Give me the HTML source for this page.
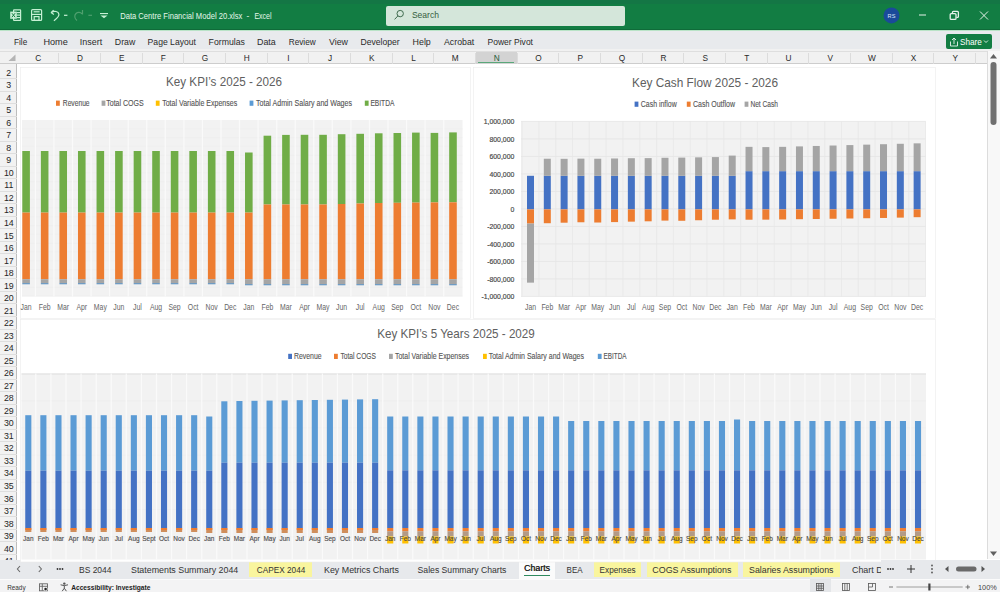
<!DOCTYPE html><html><head><meta charset="utf-8"><style>
*{margin:0;padding:0;box-sizing:border-box}
html,body{width:1000px;height:592px;overflow:hidden;background:#fff;font-family:"Liberation Sans", sans-serif;}
.a{position:absolute}
.t{position:absolute;white-space:nowrap;line-height:1}
</style></head><body>
<div class="a" style="left:0;top:0;width:1000px;height:30px;background:#127d43"></div>
<div class="a" style="left:0;top:0;width:1000px;height:4px;background:#147645"></div>
<div class="a" style="left:0;top:28.5px;width:1000px;height:1.5px;background:#0f6b39"></div>
<div class="a" style="left:0;top:30px;width:1000px;height:1px;background:#b9e3c7"></div>
<div class="a" style="left:0;top:31px;width:1000px;height:17.5px;background:#e8eaed"></div>
<svg class="a" style="left:0;top:0" width="1000" height="30">
<g fill="none" stroke="#c6f0d4" stroke-width="1.2">
 <rect x="13.6" y="9.8" width="7" height="10.6" rx="0.5"/>
 <line x1="16.5" y1="12.6" x2="20.6" y2="12.6"/><line x1="16.5" y1="15.1" x2="20.6" y2="15.1"/><line x1="16.5" y1="17.6" x2="20.6" y2="17.6"/>
 <rect x="31.6" y="9.6" width="10" height="10.8" rx="1"/>
 <line x1="31.6" y1="14.4" x2="41.6" y2="14.4"/>
 <line x1="33.6" y1="11.8" x2="39.6" y2="11.8"/>
 <rect x="34.2" y="16.6" width="4.8" height="3.8"/>
 <path d="M51 12.6 l2.6 -2.4 M51 12.6 l2.9 1.8 M51.3 12.4 c3 -1.8 7.2 -1.2 7.6 1.8 c0.4 2.6 -2.5 4.6 -5 6.6"/>
 <line x1="64" y1="15.3" x2="67.4" y2="15.3"/>
</g>
<rect x="10.2" y="11.6" width="6.6" height="7.2" fill="#c6f0d4"/>
<path d="M11.9 13.2 l3.2 4 M15.1 13.2 l-3.2 4" stroke="#177b44" stroke-width="1"/>
<g fill="none" stroke="#4f9f6e" stroke-width="1.2">
 <path d="M77 20.5 c-2.5 -2 -3 -5 -1 -7 c1.6 -1.6 4.5 -1.5 6 0.4 M82.5 10 v4.5"/>
 <line x1="88.4" y1="15.3" x2="92" y2="15.3"/>
</g>
<g fill="#c6f0d4"><rect x="100" y="13" width="8" height="1.1"/><path d="M100.5 15.6 h7 l-3.5 2.6 z"/></g>
</svg>
<div class="a" style="left:386px;top:6px;width:239px;height:20px;background:#d4e6da;border-radius:2px"></div>
<svg class="a" style="left:386px;top:6px" width="30" height="20"><g fill="none" stroke="#3f6b4e" stroke-width="1"><circle cx="14.2" cy="7.6" r="3.2"/><line x1="11.9" y1="9.9" x2="8.6" y2="13.4"/></g></svg>
<svg class="a" style="left:870px;top:0" width="130" height="30">
<circle cx="21.5" cy="15.4" r="8" fill="#1a4a9a"/>
<text x="21.5" y="17.6" font-size="5.6" font-family="Liberation Sans" fill="#dfe8f7" text-anchor="middle">RS</text>
<line x1="49" y1="15" x2="56" y2="15" stroke="#e6f2ea" stroke-width="1"/>
<g fill="none" stroke="#e6f2ea" stroke-width="1.3"><rect x="80.2" y="13.6" width="5.8" height="5.8" rx="1"/><path d="M82.4 13.4 v-1 a1 1 0 0 1 1 -1 h4 a1 1 0 0 1 1 1 v4 a1 1 0 0 1 -1 1 h-1"/></g>
<g stroke="#e6f2ea" stroke-width="1"><line x1="110" y1="11.5" x2="118" y2="19.5"/><line x1="118" y1="11.5" x2="110" y2="19.5"/></g>
</svg>
<div class="a" style="left:946px;top:33.5px;width:46px;height:15px;background:#127d43;border-radius:2px"></div>
<svg class="a" style="left:946px;top:33.5px" width="46" height="15"><g fill="none" stroke="#e8f4ec" stroke-width="0.9"><path d="M4.5 7.5 v4.5 h7 v-4.5"/><path d="M8 10 v-6 M6 6 l2 -2 l2 2"/><path d="M38 6.5 l2 2 l2 -2"/></g></svg>
<div class="a" style="left:0;top:48.5px;width:1000px;height:15.5px;background:#f1f1f1;border-bottom:1px solid #cdcdcd"></div>
<div class="a" style="left:0;top:51.3px;width:987px;height:1px;background:#dedede"></div>
<svg class="a" style="left:0;top:51px" width="20" height="13"><path d="M8.5 10 L15.5 3.5 L15.5 10 Z" fill="#b4b4b4"/></svg>
<div class="a" style="left:58.18px;top:52.5px;width:1px;height:11px;background:#dcdcdc"></div>
<div class="a" style="left:99.86px;top:52.5px;width:1px;height:11px;background:#dcdcdc"></div>
<div class="a" style="left:141.54px;top:52.5px;width:1px;height:11px;background:#dcdcdc"></div>
<div class="a" style="left:183.22px;top:52.5px;width:1px;height:11px;background:#dcdcdc"></div>
<div class="a" style="left:224.90px;top:52.5px;width:1px;height:11px;background:#dcdcdc"></div>
<div class="a" style="left:266.58px;top:52.5px;width:1px;height:11px;background:#dcdcdc"></div>
<div class="a" style="left:308.26px;top:52.5px;width:1px;height:11px;background:#dcdcdc"></div>
<div class="a" style="left:349.94px;top:52.5px;width:1px;height:11px;background:#dcdcdc"></div>
<div class="a" style="left:391.62px;top:52.5px;width:1px;height:11px;background:#dcdcdc"></div>
<div class="a" style="left:433.30px;top:52.5px;width:1px;height:11px;background:#dcdcdc"></div>
<div class="a" style="left:474.98px;top:52.5px;width:1px;height:11px;background:#dcdcdc"></div>
<div class="a" style="left:475.98px;top:51.5px;width:40.68px;height:12px;background:#d3d3d3"></div>
<div class="a" style="left:478.48px;top:62px;width:35.68px;height:1.4px;background:#5aa77a"></div>
<div class="a" style="left:516.66px;top:52.5px;width:1px;height:11px;background:#dcdcdc"></div>
<div class="a" style="left:558.34px;top:52.5px;width:1px;height:11px;background:#dcdcdc"></div>
<div class="a" style="left:600.02px;top:52.5px;width:1px;height:11px;background:#dcdcdc"></div>
<div class="a" style="left:641.70px;top:52.5px;width:1px;height:11px;background:#dcdcdc"></div>
<div class="a" style="left:683.38px;top:52.5px;width:1px;height:11px;background:#dcdcdc"></div>
<div class="a" style="left:725.06px;top:52.5px;width:1px;height:11px;background:#dcdcdc"></div>
<div class="a" style="left:766.74px;top:52.5px;width:1px;height:11px;background:#dcdcdc"></div>
<div class="a" style="left:808.42px;top:52.5px;width:1px;height:11px;background:#dcdcdc"></div>
<div class="a" style="left:850.10px;top:52.5px;width:1px;height:11px;background:#dcdcdc"></div>
<div class="a" style="left:891.78px;top:52.5px;width:1px;height:11px;background:#dcdcdc"></div>
<div class="a" style="left:933.46px;top:52.5px;width:1px;height:11px;background:#dcdcdc"></div>
<div class="a" style="left:975.14px;top:52.5px;width:1px;height:11px;background:#dcdcdc"></div>
<div class="a" style="left:0;top:63.5px;width:17px;height:496px;background:#f2f2f2;border-right:1px solid #bdbdbd"></div>
<div class="a" style="left:0;top:78.03px;width:17px;height:1px;background:#dedede"></div>
<div class="a" style="left:0;top:90.55px;width:17px;height:1px;background:#dedede"></div>
<div class="a" style="left:0;top:103.08px;width:17px;height:1px;background:#dedede"></div>
<div class="a" style="left:0;top:115.60px;width:17px;height:1px;background:#dedede"></div>
<div class="a" style="left:0;top:128.13px;width:17px;height:1px;background:#dedede"></div>
<div class="a" style="left:0;top:140.66px;width:17px;height:1px;background:#dedede"></div>
<div class="a" style="left:0;top:153.18px;width:17px;height:1px;background:#dedede"></div>
<div class="a" style="left:0;top:165.71px;width:17px;height:1px;background:#dedede"></div>
<div class="a" style="left:0;top:178.23px;width:17px;height:1px;background:#dedede"></div>
<div class="a" style="left:0;top:190.76px;width:17px;height:1px;background:#dedede"></div>
<div class="a" style="left:0;top:203.29px;width:17px;height:1px;background:#dedede"></div>
<div class="a" style="left:0;top:215.81px;width:17px;height:1px;background:#dedede"></div>
<div class="a" style="left:0;top:228.34px;width:17px;height:1px;background:#dedede"></div>
<div class="a" style="left:0;top:240.86px;width:17px;height:1px;background:#dedede"></div>
<div class="a" style="left:0;top:253.39px;width:17px;height:1px;background:#dedede"></div>
<div class="a" style="left:0;top:265.92px;width:17px;height:1px;background:#dedede"></div>
<div class="a" style="left:0;top:278.44px;width:17px;height:1px;background:#dedede"></div>
<div class="a" style="left:0;top:290.97px;width:17px;height:1px;background:#dedede"></div>
<div class="a" style="left:0;top:303.49px;width:17px;height:1px;background:#dedede"></div>
<div class="a" style="left:0;top:316.02px;width:17px;height:1px;background:#dedede"></div>
<div class="a" style="left:0;top:328.55px;width:17px;height:1px;background:#dedede"></div>
<div class="a" style="left:0;top:341.07px;width:17px;height:1px;background:#dedede"></div>
<div class="a" style="left:0;top:353.60px;width:17px;height:1px;background:#dedede"></div>
<div class="a" style="left:0;top:366.12px;width:17px;height:1px;background:#dedede"></div>
<div class="a" style="left:0;top:378.65px;width:17px;height:1px;background:#dedede"></div>
<div class="a" style="left:0;top:391.18px;width:17px;height:1px;background:#dedede"></div>
<div class="a" style="left:0;top:403.70px;width:17px;height:1px;background:#dedede"></div>
<div class="a" style="left:0;top:416.23px;width:17px;height:1px;background:#dedede"></div>
<div class="a" style="left:0;top:428.75px;width:17px;height:1px;background:#dedede"></div>
<div class="a" style="left:0;top:441.28px;width:17px;height:1px;background:#dedede"></div>
<div class="a" style="left:0;top:453.81px;width:17px;height:1px;background:#dedede"></div>
<div class="a" style="left:0;top:466.33px;width:17px;height:1px;background:#dedede"></div>
<div class="a" style="left:0;top:478.86px;width:17px;height:1px;background:#dedede"></div>
<div class="a" style="left:0;top:491.38px;width:17px;height:1px;background:#dedede"></div>
<div class="a" style="left:0;top:503.91px;width:17px;height:1px;background:#dedede"></div>
<div class="a" style="left:0;top:516.44px;width:17px;height:1px;background:#dedede"></div>
<div class="a" style="left:0;top:528.96px;width:17px;height:1px;background:#dedede"></div>
<div class="a" style="left:0;top:541.49px;width:17px;height:1px;background:#dedede"></div>
<div class="a" style="left:0;top:554.01px;width:17px;height:1px;background:#dedede"></div>
<div class="a" style="left:0;top:566.54px;width:17px;height:1px;background:#dedede"></div>
<svg class="a" style="left:0;top:0" width="20" height="559.5" font-family="Liberation Sans"><text x="8.80" y="75.66" font-size="9.8" fill="#262626" text-anchor="middle" textLength="4.91" lengthAdjust="spacingAndGlyphs">2</text><text x="8.80" y="88.19" font-size="9.8" fill="#262626" text-anchor="middle" textLength="4.91" lengthAdjust="spacingAndGlyphs">3</text><text x="8.80" y="100.72" font-size="9.8" fill="#262626" text-anchor="middle" textLength="4.91" lengthAdjust="spacingAndGlyphs">4</text><text x="8.80" y="113.24" font-size="9.8" fill="#262626" text-anchor="middle" textLength="4.91" lengthAdjust="spacingAndGlyphs">5</text><text x="8.80" y="125.77" font-size="9.8" fill="#262626" text-anchor="middle" textLength="4.91" lengthAdjust="spacingAndGlyphs">6</text><text x="8.80" y="138.29" font-size="9.8" fill="#262626" text-anchor="middle" textLength="4.91" lengthAdjust="spacingAndGlyphs">7</text><text x="8.80" y="150.82" font-size="9.8" fill="#262626" text-anchor="middle" textLength="4.91" lengthAdjust="spacingAndGlyphs">8</text><text x="8.80" y="163.35" font-size="9.8" fill="#262626" text-anchor="middle" textLength="4.91" lengthAdjust="spacingAndGlyphs">9</text><text x="8.80" y="175.87" font-size="9.8" fill="#262626" text-anchor="middle" textLength="9.81" lengthAdjust="spacingAndGlyphs">10</text><text x="8.80" y="188.40" font-size="9.8" fill="#262626" text-anchor="middle" textLength="9.16" lengthAdjust="spacingAndGlyphs">11</text><text x="8.80" y="200.92" font-size="9.8" fill="#262626" text-anchor="middle" textLength="9.81" lengthAdjust="spacingAndGlyphs">12</text><text x="8.80" y="213.45" font-size="9.8" fill="#262626" text-anchor="middle" textLength="9.81" lengthAdjust="spacingAndGlyphs">13</text><text x="8.80" y="225.98" font-size="9.8" fill="#262626" text-anchor="middle" textLength="9.81" lengthAdjust="spacingAndGlyphs">14</text><text x="8.80" y="238.50" font-size="9.8" fill="#262626" text-anchor="middle" textLength="9.81" lengthAdjust="spacingAndGlyphs">15</text><text x="8.80" y="251.03" font-size="9.8" fill="#262626" text-anchor="middle" textLength="9.81" lengthAdjust="spacingAndGlyphs">16</text><text x="8.80" y="263.55" font-size="9.8" fill="#262626" text-anchor="middle" textLength="9.81" lengthAdjust="spacingAndGlyphs">17</text><text x="8.80" y="276.08" font-size="9.8" fill="#262626" text-anchor="middle" textLength="9.81" lengthAdjust="spacingAndGlyphs">18</text><text x="8.80" y="288.60" font-size="9.8" fill="#262626" text-anchor="middle" textLength="9.81" lengthAdjust="spacingAndGlyphs">19</text><text x="8.80" y="301.13" font-size="9.8" fill="#262626" text-anchor="middle" textLength="9.81" lengthAdjust="spacingAndGlyphs">20</text><text x="8.80" y="313.66" font-size="9.8" fill="#262626" text-anchor="middle" textLength="9.81" lengthAdjust="spacingAndGlyphs">21</text><text x="8.80" y="326.18" font-size="9.8" fill="#262626" text-anchor="middle" textLength="9.81" lengthAdjust="spacingAndGlyphs">22</text><text x="8.80" y="338.71" font-size="9.8" fill="#262626" text-anchor="middle" textLength="9.81" lengthAdjust="spacingAndGlyphs">23</text><text x="8.80" y="351.23" font-size="9.8" fill="#262626" text-anchor="middle" textLength="9.81" lengthAdjust="spacingAndGlyphs">24</text><text x="8.80" y="363.76" font-size="9.8" fill="#262626" text-anchor="middle" textLength="9.81" lengthAdjust="spacingAndGlyphs">25</text><text x="8.80" y="376.29" font-size="9.8" fill="#262626" text-anchor="middle" textLength="9.81" lengthAdjust="spacingAndGlyphs">26</text><text x="8.80" y="388.81" font-size="9.8" fill="#262626" text-anchor="middle" textLength="9.81" lengthAdjust="spacingAndGlyphs">27</text><text x="8.80" y="401.34" font-size="9.8" fill="#262626" text-anchor="middle" textLength="9.81" lengthAdjust="spacingAndGlyphs">28</text><text x="8.80" y="413.86" font-size="9.8" fill="#262626" text-anchor="middle" textLength="9.81" lengthAdjust="spacingAndGlyphs">29</text><text x="8.80" y="426.39" font-size="9.8" fill="#262626" text-anchor="middle" textLength="9.81" lengthAdjust="spacingAndGlyphs">30</text><text x="8.80" y="438.92" font-size="9.8" fill="#262626" text-anchor="middle" textLength="9.81" lengthAdjust="spacingAndGlyphs">31</text><text x="8.80" y="451.44" font-size="9.8" fill="#262626" text-anchor="middle" textLength="9.81" lengthAdjust="spacingAndGlyphs">32</text><text x="8.80" y="463.97" font-size="9.8" fill="#262626" text-anchor="middle" textLength="9.81" lengthAdjust="spacingAndGlyphs">33</text><text x="8.80" y="476.49" font-size="9.8" fill="#262626" text-anchor="middle" textLength="9.81" lengthAdjust="spacingAndGlyphs">34</text><text x="8.80" y="489.02" font-size="9.8" fill="#262626" text-anchor="middle" textLength="9.81" lengthAdjust="spacingAndGlyphs">35</text><text x="8.80" y="501.55" font-size="9.8" fill="#262626" text-anchor="middle" textLength="9.81" lengthAdjust="spacingAndGlyphs">36</text><text x="8.80" y="514.07" font-size="9.8" fill="#262626" text-anchor="middle" textLength="9.81" lengthAdjust="spacingAndGlyphs">37</text><text x="8.80" y="526.60" font-size="9.8" fill="#262626" text-anchor="middle" textLength="9.81" lengthAdjust="spacingAndGlyphs">38</text><text x="8.80" y="539.12" font-size="9.8" fill="#262626" text-anchor="middle" textLength="9.81" lengthAdjust="spacingAndGlyphs">39</text><text x="8.80" y="551.65" font-size="9.8" fill="#262626" text-anchor="middle" textLength="9.81" lengthAdjust="spacingAndGlyphs">40</text><text x="8.80" y="564.18" font-size="9.8" fill="#262626" text-anchor="middle" textLength="9.81" lengthAdjust="spacingAndGlyphs">41</text></svg>
<div class="a" style="left:987px;top:51px;width:13px;height:508px;background:#f8f8f8;border-left:1px solid #dcdcdc"></div>
<svg class="a" style="left:987px;top:51px" width="13" height="508"><path d="M6.5 3 L10 7.5 L3 7.5 Z" fill="#606060"/><rect x="3.5" y="11" width="6" height="63" rx="3" fill="#707070"/><path d="M6.5 505 L10 500.5 L3 500.5 Z" fill="#606060"/></svg>
<div class="a" style="left:0;top:559.5px;width:1000px;height:19px;background:#e7e9ec"></div>
<div class="a" style="left:0;top:578.5px;width:1000px;height:13.5px;background:#f3f3f4;border-top:1px solid #fbfbfb"></div>
<div class="a" style="left:249px;top:561.5px;width:63.0px;height:15px;background:#f9f59e"></div>
<div class="a" style="left:518.8px;top:559.5px;width:35.8px;height:19px;background:#fbfbfb"></div>
<div class="a" style="left:524px;top:574.6px;width:25.6px;height:1.2px;background:#2e8a5e"></div>
<div class="a" style="left:593.8px;top:561.5px;width:47.6px;height:15px;background:#f9f59e"></div>
<div class="a" style="left:646.5px;top:561.5px;width:91.5px;height:15px;background:#f9f59e"></div>
<div class="a" style="left:743.3px;top:561.5px;width:97.0px;height:15px;background:#f9f59e"></div>
<svg class="a" style="left:0;top:578.5px" width="1000" height="14">
<g fill="none" stroke="#666" stroke-width="0.9"><rect x="39.5" y="4.8" width="8" height="7"/><line x1="39.5" y1="7.3" x2="47.5" y2="7.3"/><line x1="42.3" y1="4.8" x2="42.3" y2="11.8"/></g>
<circle cx="45.6" cy="10.1" r="2" fill="#f3f3f4"/><circle cx="45.6" cy="10.1" r="1.3" fill="#222"/>
<g fill="none" stroke="#555" stroke-width="1"><path d="M60.6 5.8 q3.7 1.6 7.4 0 M64.3 6.8 v2.4 M62.2 12.2 l2.1 -3 l2.1 3"/></g><circle cx="64.3" cy="4.6" r="1.2" fill="#555"/>
<rect x="810" y="-1.5" width="21" height="15" fill="#e4e6e9"/>
<g fill="none" stroke="#555" stroke-width="0.8"><rect x="816.5" y="4.5" width="7" height="7"/><line x1="816.5" y1="7" x2="823.5" y2="7"/><line x1="816.5" y1="9.3" x2="823.5" y2="9.3"/><line x1="818.8" y1="4.5" x2="818.8" y2="11.5"/><line x1="821.2" y1="4.5" x2="821.2" y2="11.5"/>
<rect x="842.5" y="4.5" width="7" height="7"/><line x1="844.8" y1="4.5" x2="844.8" y2="11.5"/><line x1="847.2" y1="4.5" x2="847.2" y2="11.5"/>
<rect x="868.5" y="4.5" width="7" height="7"/><path d="M868.5 8 h4 v-3.5"/></g>
<line x1="889" y1="8" x2="893" y2="8" stroke="#555" stroke-width="0.8"/>
<line x1="896.4" y1="8" x2="962.7" y2="8" stroke="#888" stroke-width="0.8"/>
<rect x="928.3" y="4.5" width="2.2" height="7" fill="#444"/>
<g stroke="#555" stroke-width="0.8"><line x1="965.5" y1="8" x2="970" y2="8"/><line x1="967.8" y1="5.8" x2="967.8" y2="10.2"/></g>
</svg>
<svg class="a" style="left:0;top:0" width="1000" height="592" font-family="Liberation Sans">
<rect x="20.5" y="67.5" width="450.0" height="251.0" fill="#fff" stroke="#ebebeb" stroke-width="0.6"/>
<rect x="22" y="120" width="440.5" height="176.5" fill="#f2f2f2"/>
<line x1="22" y1="128.8" x2="462.5" y2="128.8" stroke="#ececec" stroke-width="0.6"/>
<line x1="22" y1="137.6" x2="462.5" y2="137.6" stroke="#ececec" stroke-width="0.6"/>
<line x1="22" y1="146.4" x2="462.5" y2="146.4" stroke="#ececec" stroke-width="0.6"/>
<line x1="22" y1="155.2" x2="462.5" y2="155.2" stroke="#ececec" stroke-width="0.6"/>
<line x1="22" y1="164.0" x2="462.5" y2="164.0" stroke="#ececec" stroke-width="0.6"/>
<line x1="22" y1="172.8" x2="462.5" y2="172.8" stroke="#ececec" stroke-width="0.6"/>
<line x1="22" y1="181.6" x2="462.5" y2="181.6" stroke="#ececec" stroke-width="0.6"/>
<line x1="22" y1="190.4" x2="462.5" y2="190.4" stroke="#ececec" stroke-width="0.6"/>
<line x1="22" y1="199.2" x2="462.5" y2="199.2" stroke="#ececec" stroke-width="0.6"/>
<line x1="22" y1="208.0" x2="462.5" y2="208.0" stroke="#ececec" stroke-width="0.6"/>
<line x1="22" y1="216.8" x2="462.5" y2="216.8" stroke="#ececec" stroke-width="0.6"/>
<line x1="22" y1="225.6" x2="462.5" y2="225.6" stroke="#ececec" stroke-width="0.6"/>
<line x1="22" y1="234.4" x2="462.5" y2="234.4" stroke="#ececec" stroke-width="0.6"/>
<line x1="22" y1="243.2" x2="462.5" y2="243.2" stroke="#ececec" stroke-width="0.6"/>
<line x1="22" y1="252.0" x2="462.5" y2="252.0" stroke="#ececec" stroke-width="0.6"/>
<line x1="22" y1="260.8" x2="462.5" y2="260.8" stroke="#ececec" stroke-width="0.6"/>
<line x1="22" y1="269.6" x2="462.5" y2="269.6" stroke="#ececec" stroke-width="0.6"/>
<line x1="22" y1="278.4" x2="462.5" y2="278.4" stroke="#ececec" stroke-width="0.6"/>
<line x1="22" y1="287.2" x2="462.5" y2="287.2" stroke="#ececec" stroke-width="0.6"/>
<line x1="22" y1="296.0" x2="462.5" y2="296.0" stroke="#ececec" stroke-width="0.6"/>
<line x1="35.4" y1="120" x2="35.4" y2="296.5" stroke="#fafafa" stroke-width="1.2"/>
<line x1="53.9" y1="120" x2="53.9" y2="296.5" stroke="#fafafa" stroke-width="1.2"/>
<line x1="72.5" y1="120" x2="72.5" y2="296.5" stroke="#fafafa" stroke-width="1.2"/>
<line x1="91.1" y1="120" x2="91.1" y2="296.5" stroke="#fafafa" stroke-width="1.2"/>
<line x1="109.6" y1="120" x2="109.6" y2="296.5" stroke="#fafafa" stroke-width="1.2"/>
<line x1="128.2" y1="120" x2="128.2" y2="296.5" stroke="#fafafa" stroke-width="1.2"/>
<line x1="146.7" y1="120" x2="146.7" y2="296.5" stroke="#fafafa" stroke-width="1.2"/>
<line x1="165.3" y1="120" x2="165.3" y2="296.5" stroke="#fafafa" stroke-width="1.2"/>
<line x1="183.9" y1="120" x2="183.9" y2="296.5" stroke="#fafafa" stroke-width="1.2"/>
<line x1="202.4" y1="120" x2="202.4" y2="296.5" stroke="#fafafa" stroke-width="1.2"/>
<line x1="221.0" y1="120" x2="221.0" y2="296.5" stroke="#fafafa" stroke-width="1.2"/>
<line x1="239.5" y1="120" x2="239.5" y2="296.5" stroke="#fafafa" stroke-width="1.2"/>
<line x1="258.1" y1="120" x2="258.1" y2="296.5" stroke="#fafafa" stroke-width="1.2"/>
<line x1="276.7" y1="120" x2="276.7" y2="296.5" stroke="#fafafa" stroke-width="1.2"/>
<line x1="295.2" y1="120" x2="295.2" y2="296.5" stroke="#fafafa" stroke-width="1.2"/>
<line x1="313.8" y1="120" x2="313.8" y2="296.5" stroke="#fafafa" stroke-width="1.2"/>
<line x1="332.3" y1="120" x2="332.3" y2="296.5" stroke="#fafafa" stroke-width="1.2"/>
<line x1="350.9" y1="120" x2="350.9" y2="296.5" stroke="#fafafa" stroke-width="1.2"/>
<line x1="369.5" y1="120" x2="369.5" y2="296.5" stroke="#fafafa" stroke-width="1.2"/>
<line x1="388.0" y1="120" x2="388.0" y2="296.5" stroke="#fafafa" stroke-width="1.2"/>
<line x1="406.6" y1="120" x2="406.6" y2="296.5" stroke="#fafafa" stroke-width="1.2"/>
<line x1="425.1" y1="120" x2="425.1" y2="296.5" stroke="#fafafa" stroke-width="1.2"/>
<line x1="443.7" y1="120" x2="443.7" y2="296.5" stroke="#fafafa" stroke-width="1.2"/>
<rect x="22.30" y="151" width="7.6" height="61.60" fill="#70ad47"/>
<rect x="22.30" y="212.6" width="7.6" height="66.60" fill="#ed7d31"/>
<rect x="22.30" y="279.2" width="7.6" height="3.80" fill="#a5a5a5"/>
<rect x="22.30" y="283.0" width="7.6" height="1.3" fill="#6f9cc4"/>
<text x="26.10" y="310.00" font-size="8.6" fill="#666666" text-anchor="middle" textLength="11.09" lengthAdjust="spacingAndGlyphs">Jan</text>
<rect x="40.86" y="151" width="7.6" height="61.60" fill="#70ad47"/>
<rect x="40.86" y="212.6" width="7.6" height="66.60" fill="#ed7d31"/>
<rect x="40.86" y="279.2" width="7.6" height="3.80" fill="#a5a5a5"/>
<rect x="40.86" y="283.0" width="7.6" height="1.3" fill="#6f9cc4"/>
<text x="44.66" y="310.00" font-size="8.6" fill="#666666" text-anchor="middle" textLength="11.86" lengthAdjust="spacingAndGlyphs">Feb</text>
<rect x="59.42" y="151" width="7.6" height="61.60" fill="#70ad47"/>
<rect x="59.42" y="212.6" width="7.6" height="66.60" fill="#ed7d31"/>
<rect x="59.42" y="279.2" width="7.6" height="3.80" fill="#a5a5a5"/>
<rect x="59.42" y="283.0" width="7.6" height="1.3" fill="#6f9cc4"/>
<text x="63.22" y="310.00" font-size="8.6" fill="#666666" text-anchor="middle" textLength="11.85" lengthAdjust="spacingAndGlyphs">Mar</text>
<rect x="77.98" y="151" width="7.6" height="61.60" fill="#70ad47"/>
<rect x="77.98" y="212.6" width="7.6" height="66.60" fill="#ed7d31"/>
<rect x="77.98" y="279.2" width="7.6" height="3.80" fill="#a5a5a5"/>
<rect x="77.98" y="283.0" width="7.6" height="1.3" fill="#6f9cc4"/>
<text x="81.78" y="310.00" font-size="8.6" fill="#666666" text-anchor="middle" textLength="10.71" lengthAdjust="spacingAndGlyphs">Apr</text>
<rect x="96.54" y="151" width="7.6" height="61.60" fill="#70ad47"/>
<rect x="96.54" y="212.6" width="7.6" height="66.60" fill="#ed7d31"/>
<rect x="96.54" y="279.2" width="7.6" height="3.80" fill="#a5a5a5"/>
<rect x="96.54" y="283.0" width="7.6" height="1.3" fill="#6f9cc4"/>
<text x="100.34" y="310.00" font-size="8.6" fill="#666666" text-anchor="middle" textLength="13.00" lengthAdjust="spacingAndGlyphs">May</text>
<rect x="115.10" y="151" width="7.6" height="61.60" fill="#70ad47"/>
<rect x="115.10" y="212.6" width="7.6" height="66.60" fill="#ed7d31"/>
<rect x="115.10" y="279.2" width="7.6" height="3.80" fill="#a5a5a5"/>
<rect x="115.10" y="283.0" width="7.6" height="1.3" fill="#6f9cc4"/>
<text x="118.90" y="310.00" font-size="8.6" fill="#666666" text-anchor="middle" textLength="11.09" lengthAdjust="spacingAndGlyphs">Jun</text>
<rect x="133.66" y="151" width="7.6" height="61.60" fill="#70ad47"/>
<rect x="133.66" y="212.6" width="7.6" height="66.60" fill="#ed7d31"/>
<rect x="133.66" y="279.2" width="7.6" height="3.80" fill="#a5a5a5"/>
<rect x="133.66" y="283.0" width="7.6" height="1.3" fill="#6f9cc4"/>
<text x="137.46" y="310.00" font-size="8.6" fill="#666666" text-anchor="middle" textLength="8.79" lengthAdjust="spacingAndGlyphs">Jul</text>
<rect x="152.22" y="151" width="7.6" height="61.60" fill="#70ad47"/>
<rect x="152.22" y="212.6" width="7.6" height="66.60" fill="#ed7d31"/>
<rect x="152.22" y="279.2" width="7.6" height="3.80" fill="#a5a5a5"/>
<rect x="152.22" y="283.0" width="7.6" height="1.3" fill="#6f9cc4"/>
<text x="156.02" y="310.00" font-size="8.6" fill="#666666" text-anchor="middle" textLength="12.24" lengthAdjust="spacingAndGlyphs">Aug</text>
<rect x="170.78" y="151" width="7.6" height="61.60" fill="#70ad47"/>
<rect x="170.78" y="212.6" width="7.6" height="66.60" fill="#ed7d31"/>
<rect x="170.78" y="279.2" width="7.6" height="3.80" fill="#a5a5a5"/>
<rect x="170.78" y="283.0" width="7.6" height="1.3" fill="#6f9cc4"/>
<text x="174.58" y="310.00" font-size="8.6" fill="#666666" text-anchor="middle" textLength="12.24" lengthAdjust="spacingAndGlyphs">Sep</text>
<rect x="189.34" y="151" width="7.6" height="61.60" fill="#70ad47"/>
<rect x="189.34" y="212.6" width="7.6" height="66.60" fill="#ed7d31"/>
<rect x="189.34" y="279.2" width="7.6" height="3.80" fill="#a5a5a5"/>
<rect x="189.34" y="283.0" width="7.6" height="1.3" fill="#6f9cc4"/>
<text x="193.14" y="310.00" font-size="8.6" fill="#666666" text-anchor="middle" textLength="10.70" lengthAdjust="spacingAndGlyphs">Oct</text>
<rect x="207.90" y="151" width="7.6" height="61.60" fill="#70ad47"/>
<rect x="207.90" y="212.6" width="7.6" height="66.60" fill="#ed7d31"/>
<rect x="207.90" y="279.2" width="7.6" height="3.80" fill="#a5a5a5"/>
<rect x="207.90" y="283.0" width="7.6" height="1.3" fill="#6f9cc4"/>
<text x="211.70" y="310.00" font-size="8.6" fill="#666666" text-anchor="middle" textLength="12.23" lengthAdjust="spacingAndGlyphs">Nov</text>
<rect x="226.46" y="151" width="7.6" height="61.60" fill="#70ad47"/>
<rect x="226.46" y="212.6" width="7.6" height="66.60" fill="#ed7d31"/>
<rect x="226.46" y="279.2" width="7.6" height="3.80" fill="#a5a5a5"/>
<rect x="226.46" y="283.0" width="7.6" height="1.3" fill="#6f9cc4"/>
<text x="230.26" y="310.00" font-size="8.6" fill="#666666" text-anchor="middle" textLength="12.23" lengthAdjust="spacingAndGlyphs">Dec</text>
<rect x="245.02" y="152.5" width="7.6" height="60.10" fill="#70ad47"/>
<rect x="245.02" y="212.6" width="7.6" height="66.60" fill="#ed7d31"/>
<rect x="245.02" y="279.2" width="7.6" height="4.80" fill="#a5a5a5"/>
<rect x="245.02" y="284.0" width="7.6" height="1.3" fill="#6f9cc4"/>
<text x="248.82" y="310.00" font-size="8.6" fill="#666666" text-anchor="middle" textLength="11.09" lengthAdjust="spacingAndGlyphs">Jan</text>
<rect x="263.58" y="135.7" width="7.6" height="68.80" fill="#70ad47"/>
<rect x="263.58" y="204.5" width="7.6" height="74.70" fill="#ed7d31"/>
<rect x="263.58" y="279.2" width="7.6" height="4.80" fill="#a5a5a5"/>
<rect x="263.58" y="284.0" width="7.6" height="1.3" fill="#6f9cc4"/>
<text x="267.38" y="310.00" font-size="8.6" fill="#666666" text-anchor="middle" textLength="11.86" lengthAdjust="spacingAndGlyphs">Feb</text>
<rect x="282.14" y="134.9" width="7.6" height="69.60" fill="#70ad47"/>
<rect x="282.14" y="204.5" width="7.6" height="74.70" fill="#ed7d31"/>
<rect x="282.14" y="279.2" width="7.6" height="4.80" fill="#a5a5a5"/>
<rect x="282.14" y="284.0" width="7.6" height="1.3" fill="#6f9cc4"/>
<text x="285.94" y="310.00" font-size="8.6" fill="#666666" text-anchor="middle" textLength="11.85" lengthAdjust="spacingAndGlyphs">Mar</text>
<rect x="300.70" y="134.8" width="7.6" height="69.70" fill="#70ad47"/>
<rect x="300.70" y="204.5" width="7.6" height="74.70" fill="#ed7d31"/>
<rect x="300.70" y="279.2" width="7.6" height="4.80" fill="#a5a5a5"/>
<rect x="300.70" y="284.0" width="7.6" height="1.3" fill="#6f9cc4"/>
<text x="304.50" y="310.00" font-size="8.6" fill="#666666" text-anchor="middle" textLength="10.71" lengthAdjust="spacingAndGlyphs">Apr</text>
<rect x="319.26" y="134.8" width="7.6" height="69.70" fill="#70ad47"/>
<rect x="319.26" y="204.5" width="7.6" height="74.70" fill="#ed7d31"/>
<rect x="319.26" y="279.2" width="7.6" height="4.80" fill="#a5a5a5"/>
<rect x="319.26" y="284.0" width="7.6" height="1.3" fill="#6f9cc4"/>
<text x="323.06" y="310.00" font-size="8.6" fill="#666666" text-anchor="middle" textLength="13.00" lengthAdjust="spacingAndGlyphs">May</text>
<rect x="337.82" y="134.2" width="7.6" height="69.80" fill="#70ad47"/>
<rect x="337.82" y="204" width="7.6" height="75.20" fill="#ed7d31"/>
<rect x="337.82" y="279.2" width="7.6" height="4.80" fill="#a5a5a5"/>
<rect x="337.82" y="284.0" width="7.6" height="1.3" fill="#6f9cc4"/>
<text x="341.62" y="310.00" font-size="8.6" fill="#666666" text-anchor="middle" textLength="11.09" lengthAdjust="spacingAndGlyphs">Jun</text>
<rect x="356.38" y="133.8" width="7.6" height="69.70" fill="#70ad47"/>
<rect x="356.38" y="203.5" width="7.6" height="75.70" fill="#ed7d31"/>
<rect x="356.38" y="279.2" width="7.6" height="4.80" fill="#a5a5a5"/>
<rect x="356.38" y="284.0" width="7.6" height="1.3" fill="#6f9cc4"/>
<text x="360.18" y="310.00" font-size="8.6" fill="#666666" text-anchor="middle" textLength="8.79" lengthAdjust="spacingAndGlyphs">Jul</text>
<rect x="374.94" y="133.3" width="7.6" height="69.70" fill="#70ad47"/>
<rect x="374.94" y="203" width="7.6" height="76.20" fill="#ed7d31"/>
<rect x="374.94" y="279.2" width="7.6" height="4.80" fill="#a5a5a5"/>
<rect x="374.94" y="284.0" width="7.6" height="1.3" fill="#6f9cc4"/>
<text x="378.74" y="310.00" font-size="8.6" fill="#666666" text-anchor="middle" textLength="12.24" lengthAdjust="spacingAndGlyphs">Aug</text>
<rect x="393.50" y="133" width="7.6" height="69.80" fill="#70ad47"/>
<rect x="393.50" y="202.8" width="7.6" height="76.40" fill="#ed7d31"/>
<rect x="393.50" y="279.2" width="7.6" height="4.80" fill="#a5a5a5"/>
<rect x="393.50" y="284.0" width="7.6" height="1.3" fill="#6f9cc4"/>
<text x="397.30" y="310.00" font-size="8.6" fill="#666666" text-anchor="middle" textLength="12.24" lengthAdjust="spacingAndGlyphs">Sep</text>
<rect x="412.06" y="132.6" width="7.6" height="70.00" fill="#70ad47"/>
<rect x="412.06" y="202.6" width="7.6" height="76.60" fill="#ed7d31"/>
<rect x="412.06" y="279.2" width="7.6" height="4.80" fill="#a5a5a5"/>
<rect x="412.06" y="284.0" width="7.6" height="1.3" fill="#6f9cc4"/>
<text x="415.86" y="310.00" font-size="8.6" fill="#666666" text-anchor="middle" textLength="10.70" lengthAdjust="spacingAndGlyphs">Oct</text>
<rect x="430.62" y="132.9" width="7.6" height="69.50" fill="#70ad47"/>
<rect x="430.62" y="202.4" width="7.6" height="76.80" fill="#ed7d31"/>
<rect x="430.62" y="279.2" width="7.6" height="4.80" fill="#a5a5a5"/>
<rect x="430.62" y="284.0" width="7.6" height="1.3" fill="#6f9cc4"/>
<text x="434.42" y="310.00" font-size="8.6" fill="#666666" text-anchor="middle" textLength="12.23" lengthAdjust="spacingAndGlyphs">Nov</text>
<rect x="449.18" y="132.4" width="7.6" height="69.90" fill="#70ad47"/>
<rect x="449.18" y="202.3" width="7.6" height="76.90" fill="#ed7d31"/>
<rect x="449.18" y="279.2" width="7.6" height="4.80" fill="#a5a5a5"/>
<rect x="449.18" y="284.0" width="7.6" height="1.3" fill="#6f9cc4"/>
<text x="452.98" y="310.00" font-size="8.6" fill="#666666" text-anchor="middle" textLength="12.23" lengthAdjust="spacingAndGlyphs">Dec</text>
<text x="224.00" y="85.80" font-size="13.4" fill="#606060" text-anchor="middle" textLength="116.00" lengthAdjust="spacingAndGlyphs">Key KPI&#8217;s 2025 - 2026</text>
<rect x="56" y="100.6" width="3.8" height="5.2" fill="#ed7d31"/>
<text x="62.80" y="106.00" font-size="8.6" fill="#555555" stroke="#555555" stroke-width="0.12" text-anchor="start" textLength="26.80" lengthAdjust="spacingAndGlyphs">Revenue</text>
<rect x="101.6" y="100.6" width="3.8" height="5.2" fill="#a5a5a5"/>
<text x="106.20" y="106.00" font-size="8.6" fill="#555555" stroke="#555555" stroke-width="0.12" text-anchor="start" textLength="37.60" lengthAdjust="spacingAndGlyphs">Total COGS</text>
<rect x="155.8" y="100.6" width="3.8" height="5.2" fill="#ffc000"/>
<text x="162.20" y="106.00" font-size="8.6" fill="#555555" stroke="#555555" stroke-width="0.12" text-anchor="start" textLength="75.00" lengthAdjust="spacingAndGlyphs">Total Variable Expenses</text>
<rect x="249.6" y="100.6" width="3.8" height="5.2" fill="#5b9bd5"/>
<text x="256.00" y="106.00" font-size="8.6" fill="#555555" stroke="#555555" stroke-width="0.12" text-anchor="start" textLength="96.00" lengthAdjust="spacingAndGlyphs">Total Admin Salary and Wages</text>
<rect x="364.8" y="100.6" width="3.8" height="5.2" fill="#70ad47"/>
<text x="370.40" y="106.00" font-size="8.6" fill="#555555" stroke="#555555" stroke-width="0.12" text-anchor="start" textLength="24.00" lengthAdjust="spacingAndGlyphs">EBITDA</text>
<rect x="473.5" y="67.5" width="462.0" height="251.0" fill="#fff" stroke="#ebebeb" stroke-width="0.6"/>
<rect x="521" y="121.4" width="404.79999999999995" height="174.99999999999997" fill="#f2f2f2"/>
<line x1="521" y1="121.4" x2="925.8" y2="121.4" stroke="#e3e3e3" stroke-width="0.7"/>
<text x="514.30" y="124.30" font-size="8.0" fill="#4a4a4a" stroke="#4a4a4a" stroke-width="0.2" text-anchor="end" textLength="30.61" lengthAdjust="spacingAndGlyphs">1,000,000</text>
<line x1="521" y1="138.9" x2="925.8" y2="138.9" stroke="#e3e3e3" stroke-width="0.7"/>
<text x="514.30" y="141.80" font-size="8.0" fill="#4a4a4a" stroke="#4a4a4a" stroke-width="0.2" text-anchor="end" textLength="24.87" lengthAdjust="spacingAndGlyphs">800,000</text>
<line x1="521" y1="156.4" x2="925.8" y2="156.4" stroke="#e3e3e3" stroke-width="0.7"/>
<text x="514.30" y="159.30" font-size="8.0" fill="#4a4a4a" stroke="#4a4a4a" stroke-width="0.2" text-anchor="end" textLength="24.87" lengthAdjust="spacingAndGlyphs">600,000</text>
<line x1="521" y1="173.9" x2="925.8" y2="173.9" stroke="#e3e3e3" stroke-width="0.7"/>
<text x="514.30" y="176.80" font-size="8.0" fill="#4a4a4a" stroke="#4a4a4a" stroke-width="0.2" text-anchor="end" textLength="24.87" lengthAdjust="spacingAndGlyphs">400,000</text>
<line x1="521" y1="191.4" x2="925.8" y2="191.4" stroke="#e3e3e3" stroke-width="0.7"/>
<text x="514.30" y="194.30" font-size="8.0" fill="#4a4a4a" stroke="#4a4a4a" stroke-width="0.2" text-anchor="end" textLength="24.87" lengthAdjust="spacingAndGlyphs">200,000</text>
<line x1="521" y1="208.9" x2="925.8" y2="208.9" stroke="#e3e3e3" stroke-width="0.7"/>
<text x="514.30" y="211.80" font-size="8.0" fill="#4a4a4a" stroke="#4a4a4a" stroke-width="0.2" text-anchor="end" textLength="3.83" lengthAdjust="spacingAndGlyphs">0</text>
<line x1="521" y1="226.4" x2="925.8" y2="226.4" stroke="#e3e3e3" stroke-width="0.7"/>
<text x="514.30" y="229.30" font-size="8.0" fill="#4a4a4a" stroke="#4a4a4a" stroke-width="0.2" text-anchor="end" textLength="27.16" lengthAdjust="spacingAndGlyphs">-200,000</text>
<line x1="521" y1="243.9" x2="925.8" y2="243.9" stroke="#e3e3e3" stroke-width="0.7"/>
<text x="514.30" y="246.80" font-size="8.0" fill="#4a4a4a" stroke="#4a4a4a" stroke-width="0.2" text-anchor="end" textLength="27.16" lengthAdjust="spacingAndGlyphs">-400,000</text>
<line x1="521" y1="261.4" x2="925.8" y2="261.4" stroke="#e3e3e3" stroke-width="0.7"/>
<text x="514.30" y="264.30" font-size="8.0" fill="#4a4a4a" stroke="#4a4a4a" stroke-width="0.2" text-anchor="end" textLength="27.16" lengthAdjust="spacingAndGlyphs">-600,000</text>
<line x1="521" y1="278.9" x2="925.8" y2="278.9" stroke="#e3e3e3" stroke-width="0.7"/>
<text x="514.30" y="281.80" font-size="8.0" fill="#4a4a4a" stroke="#4a4a4a" stroke-width="0.2" text-anchor="end" textLength="27.16" lengthAdjust="spacingAndGlyphs">-800,000</text>
<line x1="521" y1="296.4" x2="925.8" y2="296.4" stroke="#e3e3e3" stroke-width="0.7"/>
<text x="514.30" y="299.30" font-size="8.0" fill="#4a4a4a" stroke="#4a4a4a" stroke-width="0.2" text-anchor="end" textLength="32.90" lengthAdjust="spacingAndGlyphs">-1,000,000</text>
<line x1="522.1" y1="121.4" x2="522.1" y2="296.4" stroke="#e6e6e6" stroke-width="0.7"/>
<line x1="538.9" y1="121.4" x2="538.9" y2="296.4" stroke="#e6e6e6" stroke-width="0.7"/>
<line x1="555.7" y1="121.4" x2="555.7" y2="296.4" stroke="#e6e6e6" stroke-width="0.7"/>
<line x1="572.5" y1="121.4" x2="572.5" y2="296.4" stroke="#e6e6e6" stroke-width="0.7"/>
<line x1="589.3" y1="121.4" x2="589.3" y2="296.4" stroke="#e6e6e6" stroke-width="0.7"/>
<line x1="606.1" y1="121.4" x2="606.1" y2="296.4" stroke="#e6e6e6" stroke-width="0.7"/>
<line x1="623.0" y1="121.4" x2="623.0" y2="296.4" stroke="#e6e6e6" stroke-width="0.7"/>
<line x1="639.8" y1="121.4" x2="639.8" y2="296.4" stroke="#e6e6e6" stroke-width="0.7"/>
<line x1="656.6" y1="121.4" x2="656.6" y2="296.4" stroke="#e6e6e6" stroke-width="0.7"/>
<line x1="673.4" y1="121.4" x2="673.4" y2="296.4" stroke="#e6e6e6" stroke-width="0.7"/>
<line x1="690.2" y1="121.4" x2="690.2" y2="296.4" stroke="#e6e6e6" stroke-width="0.7"/>
<line x1="707.0" y1="121.4" x2="707.0" y2="296.4" stroke="#e6e6e6" stroke-width="0.7"/>
<line x1="723.8" y1="121.4" x2="723.8" y2="296.4" stroke="#e6e6e6" stroke-width="0.7"/>
<line x1="740.6" y1="121.4" x2="740.6" y2="296.4" stroke="#e6e6e6" stroke-width="0.7"/>
<line x1="757.4" y1="121.4" x2="757.4" y2="296.4" stroke="#e6e6e6" stroke-width="0.7"/>
<line x1="774.2" y1="121.4" x2="774.2" y2="296.4" stroke="#e6e6e6" stroke-width="0.7"/>
<line x1="791.1" y1="121.4" x2="791.1" y2="296.4" stroke="#e6e6e6" stroke-width="0.7"/>
<line x1="807.9" y1="121.4" x2="807.9" y2="296.4" stroke="#e6e6e6" stroke-width="0.7"/>
<line x1="824.7" y1="121.4" x2="824.7" y2="296.4" stroke="#e6e6e6" stroke-width="0.7"/>
<line x1="841.5" y1="121.4" x2="841.5" y2="296.4" stroke="#e6e6e6" stroke-width="0.7"/>
<line x1="858.3" y1="121.4" x2="858.3" y2="296.4" stroke="#e6e6e6" stroke-width="0.7"/>
<line x1="875.1" y1="121.4" x2="875.1" y2="296.4" stroke="#e6e6e6" stroke-width="0.7"/>
<line x1="891.9" y1="121.4" x2="891.9" y2="296.4" stroke="#e6e6e6" stroke-width="0.7"/>
<line x1="908.7" y1="121.4" x2="908.7" y2="296.4" stroke="#e6e6e6" stroke-width="0.7"/>
<line x1="925.5" y1="121.4" x2="925.5" y2="296.4" stroke="#e6e6e6" stroke-width="0.7"/>
<rect x="527.00" y="175.80" width="7" height="33.60" fill="#4472c4"/>
<rect x="527.00" y="209.4" width="7" height="14.18" fill="#ed7d31"/>
<rect x="527.00" y="223.58" width="7" height="59.06" fill="#a5a5a5"/>
<text x="530.50" y="310.00" font-size="8.6" fill="#666666" text-anchor="middle" textLength="11.09" lengthAdjust="spacingAndGlyphs">Jan</text>
<rect x="543.81" y="175.80" width="7" height="33.60" fill="#4472c4"/>
<rect x="543.81" y="209.4" width="7" height="13.82" fill="#ed7d31"/>
<rect x="543.81" y="158.74" width="7" height="17.06" fill="#a5a5a5"/>
<text x="547.31" y="310.00" font-size="8.6" fill="#666666" text-anchor="middle" textLength="11.86" lengthAdjust="spacingAndGlyphs">Feb</text>
<rect x="560.62" y="175.80" width="7" height="33.60" fill="#4472c4"/>
<rect x="560.62" y="209.4" width="7" height="13.30" fill="#ed7d31"/>
<rect x="560.62" y="158.82" width="7" height="16.98" fill="#a5a5a5"/>
<text x="564.12" y="310.00" font-size="8.6" fill="#666666" text-anchor="middle" textLength="11.85" lengthAdjust="spacingAndGlyphs">Mar</text>
<rect x="577.43" y="175.80" width="7" height="33.60" fill="#4472c4"/>
<rect x="577.43" y="209.4" width="7" height="12.86" fill="#ed7d31"/>
<rect x="577.43" y="158.65" width="7" height="17.15" fill="#a5a5a5"/>
<text x="580.93" y="310.00" font-size="8.6" fill="#666666" text-anchor="middle" textLength="10.71" lengthAdjust="spacingAndGlyphs">Apr</text>
<rect x="594.24" y="175.80" width="7" height="33.60" fill="#4472c4"/>
<rect x="594.24" y="209.4" width="7" height="13.12" fill="#ed7d31"/>
<rect x="594.24" y="158.74" width="7" height="17.06" fill="#a5a5a5"/>
<text x="597.74" y="310.00" font-size="8.6" fill="#666666" text-anchor="middle" textLength="13.00" lengthAdjust="spacingAndGlyphs">May</text>
<rect x="611.05" y="175.80" width="7" height="33.60" fill="#4472c4"/>
<rect x="611.05" y="209.4" width="7" height="12.69" fill="#ed7d31"/>
<rect x="611.05" y="158.48" width="7" height="17.32" fill="#a5a5a5"/>
<text x="614.55" y="310.00" font-size="8.6" fill="#666666" text-anchor="middle" textLength="11.09" lengthAdjust="spacingAndGlyphs">Jun</text>
<rect x="627.86" y="175.80" width="7" height="33.60" fill="#4472c4"/>
<rect x="627.86" y="209.4" width="7" height="12.25" fill="#ed7d31"/>
<rect x="627.86" y="158.21" width="7" height="17.59" fill="#a5a5a5"/>
<text x="631.36" y="310.00" font-size="8.6" fill="#666666" text-anchor="middle" textLength="8.79" lengthAdjust="spacingAndGlyphs">Jul</text>
<rect x="644.67" y="175.80" width="7" height="33.60" fill="#4472c4"/>
<rect x="644.67" y="209.4" width="7" height="11.90" fill="#ed7d31"/>
<rect x="644.67" y="158.12" width="7" height="17.68" fill="#a5a5a5"/>
<text x="648.17" y="310.00" font-size="8.6" fill="#666666" text-anchor="middle" textLength="12.24" lengthAdjust="spacingAndGlyphs">Aug</text>
<rect x="661.48" y="175.80" width="7" height="33.60" fill="#4472c4"/>
<rect x="661.48" y="209.4" width="7" height="11.20" fill="#ed7d31"/>
<rect x="661.48" y="157.78" width="7" height="18.03" fill="#a5a5a5"/>
<text x="664.98" y="310.00" font-size="8.6" fill="#666666" text-anchor="middle" textLength="12.24" lengthAdjust="spacingAndGlyphs">Sep</text>
<rect x="678.29" y="175.80" width="7" height="33.60" fill="#4472c4"/>
<rect x="678.29" y="209.4" width="7" height="11.38" fill="#ed7d31"/>
<rect x="678.29" y="157.60" width="7" height="18.20" fill="#a5a5a5"/>
<text x="681.79" y="310.00" font-size="8.6" fill="#666666" text-anchor="middle" textLength="10.70" lengthAdjust="spacingAndGlyphs">Oct</text>
<rect x="695.10" y="175.80" width="7" height="33.60" fill="#4472c4"/>
<rect x="695.10" y="209.4" width="7" height="10.85" fill="#ed7d31"/>
<rect x="695.10" y="157.34" width="7" height="18.46" fill="#a5a5a5"/>
<text x="698.60" y="310.00" font-size="8.6" fill="#666666" text-anchor="middle" textLength="12.23" lengthAdjust="spacingAndGlyphs">Nov</text>
<rect x="711.91" y="175.80" width="7" height="33.60" fill="#4472c4"/>
<rect x="711.91" y="209.4" width="7" height="10.32" fill="#ed7d31"/>
<rect x="711.91" y="157.07" width="7" height="18.73" fill="#a5a5a5"/>
<text x="715.41" y="310.00" font-size="8.6" fill="#666666" text-anchor="middle" textLength="12.23" lengthAdjust="spacingAndGlyphs">Dec</text>
<rect x="728.72" y="175.80" width="7" height="33.60" fill="#4472c4"/>
<rect x="728.72" y="209.4" width="7" height="9.97" fill="#ed7d31"/>
<rect x="728.72" y="155.59" width="7" height="20.21" fill="#a5a5a5"/>
<text x="732.22" y="310.00" font-size="8.6" fill="#666666" text-anchor="middle" textLength="11.09" lengthAdjust="spacingAndGlyphs">Jan</text>
<rect x="745.53" y="171.16" width="7" height="38.24" fill="#4472c4"/>
<rect x="745.53" y="209.4" width="7" height="10.32" fill="#ed7d31"/>
<rect x="745.53" y="146.84" width="7" height="24.33" fill="#a5a5a5"/>
<text x="749.03" y="310.00" font-size="8.6" fill="#666666" text-anchor="middle" textLength="11.86" lengthAdjust="spacingAndGlyphs">Feb</text>
<rect x="762.34" y="171.16" width="7" height="38.24" fill="#4472c4"/>
<rect x="762.34" y="209.4" width="7" height="10.24" fill="#ed7d31"/>
<rect x="762.34" y="147.10" width="7" height="24.06" fill="#a5a5a5"/>
<text x="765.84" y="310.00" font-size="8.6" fill="#666666" text-anchor="middle" textLength="11.85" lengthAdjust="spacingAndGlyphs">Mar</text>
<rect x="779.15" y="171.16" width="7" height="38.24" fill="#4472c4"/>
<rect x="779.15" y="209.4" width="7" height="10.06" fill="#ed7d31"/>
<rect x="779.15" y="146.84" width="7" height="24.33" fill="#a5a5a5"/>
<text x="782.65" y="310.00" font-size="8.6" fill="#666666" text-anchor="middle" textLength="10.71" lengthAdjust="spacingAndGlyphs">Apr</text>
<rect x="795.96" y="171.16" width="7" height="38.24" fill="#4472c4"/>
<rect x="795.96" y="209.4" width="7" height="9.80" fill="#ed7d31"/>
<rect x="795.96" y="146.40" width="7" height="24.76" fill="#a5a5a5"/>
<text x="799.46" y="310.00" font-size="8.6" fill="#666666" text-anchor="middle" textLength="13.00" lengthAdjust="spacingAndGlyphs">May</text>
<rect x="812.77" y="171.16" width="7" height="38.24" fill="#4472c4"/>
<rect x="812.77" y="209.4" width="7" height="9.62" fill="#ed7d31"/>
<rect x="812.77" y="145.96" width="7" height="25.20" fill="#a5a5a5"/>
<text x="816.27" y="310.00" font-size="8.6" fill="#666666" text-anchor="middle" textLength="11.09" lengthAdjust="spacingAndGlyphs">Jun</text>
<rect x="829.58" y="171.16" width="7" height="38.24" fill="#4472c4"/>
<rect x="829.58" y="209.4" width="7" height="9.36" fill="#ed7d31"/>
<rect x="829.58" y="145.53" width="7" height="25.64" fill="#a5a5a5"/>
<text x="833.08" y="310.00" font-size="8.6" fill="#666666" text-anchor="middle" textLength="8.79" lengthAdjust="spacingAndGlyphs">Jul</text>
<rect x="846.39" y="171.16" width="7" height="38.24" fill="#4472c4"/>
<rect x="846.39" y="209.4" width="7" height="9.10" fill="#ed7d31"/>
<rect x="846.39" y="145.09" width="7" height="26.08" fill="#a5a5a5"/>
<text x="849.89" y="310.00" font-size="8.6" fill="#666666" text-anchor="middle" textLength="12.24" lengthAdjust="spacingAndGlyphs">Aug</text>
<rect x="863.20" y="171.16" width="7" height="38.24" fill="#4472c4"/>
<rect x="863.20" y="209.4" width="7" height="8.84" fill="#ed7d31"/>
<rect x="863.20" y="144.65" width="7" height="26.51" fill="#a5a5a5"/>
<text x="866.70" y="310.00" font-size="8.6" fill="#666666" text-anchor="middle" textLength="12.24" lengthAdjust="spacingAndGlyphs">Sep</text>
<rect x="880.01" y="171.16" width="7" height="38.24" fill="#4472c4"/>
<rect x="880.01" y="209.4" width="7" height="8.57" fill="#ed7d31"/>
<rect x="880.01" y="144.21" width="7" height="26.95" fill="#a5a5a5"/>
<text x="883.51" y="310.00" font-size="8.6" fill="#666666" text-anchor="middle" textLength="10.70" lengthAdjust="spacingAndGlyphs">Oct</text>
<rect x="896.82" y="171.16" width="7" height="38.24" fill="#4472c4"/>
<rect x="896.82" y="209.4" width="7" height="8.22" fill="#ed7d31"/>
<rect x="896.82" y="143.78" width="7" height="27.39" fill="#a5a5a5"/>
<text x="900.32" y="310.00" font-size="8.6" fill="#666666" text-anchor="middle" textLength="12.23" lengthAdjust="spacingAndGlyphs">Nov</text>
<rect x="913.63" y="171.16" width="7" height="38.24" fill="#4472c4"/>
<rect x="913.63" y="209.4" width="7" height="7.79" fill="#ed7d31"/>
<rect x="913.63" y="143.34" width="7" height="27.83" fill="#a5a5a5"/>
<text x="917.13" y="310.00" font-size="8.6" fill="#666666" text-anchor="middle" textLength="12.23" lengthAdjust="spacingAndGlyphs">Dec</text>
<text x="705.00" y="86.80" font-size="13.4" fill="#606060" text-anchor="middle" textLength="146.00" lengthAdjust="spacingAndGlyphs">Key Cash Flow 2025 - 2026</text>
<rect x="634.6" y="101.6" width="3.8" height="5.2" fill="#4472c4"/>
<text x="640.80" y="107.00" font-size="8.6" fill="#555555" stroke="#555555" stroke-width="0.12" text-anchor="start" textLength="35.90" lengthAdjust="spacingAndGlyphs">Cash inflow</text>
<rect x="686.8" y="101.6" width="3.8" height="5.2" fill="#ed7d31"/>
<text x="693.00" y="107.00" font-size="8.6" fill="#555555" stroke="#555555" stroke-width="0.12" text-anchor="start" textLength="42.00" lengthAdjust="spacingAndGlyphs">Cash Outflow</text>
<rect x="744.6" y="101.6" width="3.8" height="5.2" fill="#a5a5a5"/>
<text x="750.40" y="107.00" font-size="8.6" fill="#555555" stroke="#555555" stroke-width="0.12" text-anchor="start" textLength="27.60" lengthAdjust="spacingAndGlyphs">Net Cash</text>
<rect x="20.5" y="319.5" width="915.0" height="242.5" fill="#fff" stroke="#ebebeb" stroke-width="0.6"/>
<rect x="21.5" y="373.5" width="904.5" height="186.0" fill="#f2f2f2"/>
<line x1="21.5" y1="374.0" x2="926" y2="374.0" stroke="#dedede" stroke-width="1"/>
<line x1="21.5" y1="400.7" x2="926" y2="400.7" stroke="#ececec" stroke-width="0.6"/>
<line x1="21.5" y1="427.9" x2="926" y2="427.9" stroke="#ececec" stroke-width="0.6"/>
<line x1="21.5" y1="455.1" x2="926" y2="455.1" stroke="#ececec" stroke-width="0.6"/>
<line x1="21.5" y1="482.3" x2="926" y2="482.3" stroke="#ececec" stroke-width="0.6"/>
<line x1="21.5" y1="509.5" x2="926" y2="509.5" stroke="#ececec" stroke-width="0.6"/>
<line x1="21.5" y1="536.7" x2="926" y2="536.7" stroke="#ececec" stroke-width="0.6"/>
<line x1="35.8" y1="373.5" x2="35.8" y2="559.5" stroke="#fafafa" stroke-width="1.2"/>
<line x1="50.9" y1="373.5" x2="50.9" y2="559.5" stroke="#fafafa" stroke-width="1.2"/>
<line x1="66.0" y1="373.5" x2="66.0" y2="559.5" stroke="#fafafa" stroke-width="1.2"/>
<line x1="81.1" y1="373.5" x2="81.1" y2="559.5" stroke="#fafafa" stroke-width="1.2"/>
<line x1="96.2" y1="373.5" x2="96.2" y2="559.5" stroke="#fafafa" stroke-width="1.2"/>
<line x1="111.2" y1="373.5" x2="111.2" y2="559.5" stroke="#fafafa" stroke-width="1.2"/>
<line x1="126.3" y1="373.5" x2="126.3" y2="559.5" stroke="#fafafa" stroke-width="1.2"/>
<line x1="141.4" y1="373.5" x2="141.4" y2="559.5" stroke="#fafafa" stroke-width="1.2"/>
<line x1="156.5" y1="373.5" x2="156.5" y2="559.5" stroke="#fafafa" stroke-width="1.2"/>
<line x1="171.6" y1="373.5" x2="171.6" y2="559.5" stroke="#fafafa" stroke-width="1.2"/>
<line x1="186.6" y1="373.5" x2="186.6" y2="559.5" stroke="#fafafa" stroke-width="1.2"/>
<line x1="201.7" y1="373.5" x2="201.7" y2="559.5" stroke="#fafafa" stroke-width="1.2"/>
<line x1="216.8" y1="373.5" x2="216.8" y2="559.5" stroke="#fafafa" stroke-width="1.2"/>
<line x1="231.9" y1="373.5" x2="231.9" y2="559.5" stroke="#fafafa" stroke-width="1.2"/>
<line x1="247.0" y1="373.5" x2="247.0" y2="559.5" stroke="#fafafa" stroke-width="1.2"/>
<line x1="262.0" y1="373.5" x2="262.0" y2="559.5" stroke="#fafafa" stroke-width="1.2"/>
<line x1="277.1" y1="373.5" x2="277.1" y2="559.5" stroke="#fafafa" stroke-width="1.2"/>
<line x1="292.2" y1="373.5" x2="292.2" y2="559.5" stroke="#fafafa" stroke-width="1.2"/>
<line x1="307.3" y1="373.5" x2="307.3" y2="559.5" stroke="#fafafa" stroke-width="1.2"/>
<line x1="322.4" y1="373.5" x2="322.4" y2="559.5" stroke="#fafafa" stroke-width="1.2"/>
<line x1="337.4" y1="373.5" x2="337.4" y2="559.5" stroke="#fafafa" stroke-width="1.2"/>
<line x1="352.5" y1="373.5" x2="352.5" y2="559.5" stroke="#fafafa" stroke-width="1.2"/>
<line x1="367.6" y1="373.5" x2="367.6" y2="559.5" stroke="#fafafa" stroke-width="1.2"/>
<line x1="382.7" y1="373.5" x2="382.7" y2="559.5" stroke="#fafafa" stroke-width="1.2"/>
<line x1="397.8" y1="373.5" x2="397.8" y2="559.5" stroke="#fafafa" stroke-width="1.2"/>
<line x1="412.8" y1="373.5" x2="412.8" y2="559.5" stroke="#fafafa" stroke-width="1.2"/>
<line x1="427.9" y1="373.5" x2="427.9" y2="559.5" stroke="#fafafa" stroke-width="1.2"/>
<line x1="443.0" y1="373.5" x2="443.0" y2="559.5" stroke="#fafafa" stroke-width="1.2"/>
<line x1="458.1" y1="373.5" x2="458.1" y2="559.5" stroke="#fafafa" stroke-width="1.2"/>
<line x1="473.2" y1="373.5" x2="473.2" y2="559.5" stroke="#fafafa" stroke-width="1.2"/>
<line x1="488.2" y1="373.5" x2="488.2" y2="559.5" stroke="#fafafa" stroke-width="1.2"/>
<line x1="503.3" y1="373.5" x2="503.3" y2="559.5" stroke="#fafafa" stroke-width="1.2"/>
<line x1="518.4" y1="373.5" x2="518.4" y2="559.5" stroke="#fafafa" stroke-width="1.2"/>
<line x1="533.5" y1="373.5" x2="533.5" y2="559.5" stroke="#fafafa" stroke-width="1.2"/>
<line x1="548.6" y1="373.5" x2="548.6" y2="559.5" stroke="#fafafa" stroke-width="1.2"/>
<line x1="563.6" y1="373.5" x2="563.6" y2="559.5" stroke="#fafafa" stroke-width="1.2"/>
<line x1="578.7" y1="373.5" x2="578.7" y2="559.5" stroke="#fafafa" stroke-width="1.2"/>
<line x1="593.8" y1="373.5" x2="593.8" y2="559.5" stroke="#fafafa" stroke-width="1.2"/>
<line x1="608.9" y1="373.5" x2="608.9" y2="559.5" stroke="#fafafa" stroke-width="1.2"/>
<line x1="624.0" y1="373.5" x2="624.0" y2="559.5" stroke="#fafafa" stroke-width="1.2"/>
<line x1="639.0" y1="373.5" x2="639.0" y2="559.5" stroke="#fafafa" stroke-width="1.2"/>
<line x1="654.1" y1="373.5" x2="654.1" y2="559.5" stroke="#fafafa" stroke-width="1.2"/>
<line x1="669.2" y1="373.5" x2="669.2" y2="559.5" stroke="#fafafa" stroke-width="1.2"/>
<line x1="684.3" y1="373.5" x2="684.3" y2="559.5" stroke="#fafafa" stroke-width="1.2"/>
<line x1="699.4" y1="373.5" x2="699.4" y2="559.5" stroke="#fafafa" stroke-width="1.2"/>
<line x1="714.4" y1="373.5" x2="714.4" y2="559.5" stroke="#fafafa" stroke-width="1.2"/>
<line x1="729.5" y1="373.5" x2="729.5" y2="559.5" stroke="#fafafa" stroke-width="1.2"/>
<line x1="744.6" y1="373.5" x2="744.6" y2="559.5" stroke="#fafafa" stroke-width="1.2"/>
<line x1="759.7" y1="373.5" x2="759.7" y2="559.5" stroke="#fafafa" stroke-width="1.2"/>
<line x1="774.8" y1="373.5" x2="774.8" y2="559.5" stroke="#fafafa" stroke-width="1.2"/>
<line x1="789.8" y1="373.5" x2="789.8" y2="559.5" stroke="#fafafa" stroke-width="1.2"/>
<line x1="804.9" y1="373.5" x2="804.9" y2="559.5" stroke="#fafafa" stroke-width="1.2"/>
<line x1="820.0" y1="373.5" x2="820.0" y2="559.5" stroke="#fafafa" stroke-width="1.2"/>
<line x1="835.1" y1="373.5" x2="835.1" y2="559.5" stroke="#fafafa" stroke-width="1.2"/>
<line x1="850.2" y1="373.5" x2="850.2" y2="559.5" stroke="#fafafa" stroke-width="1.2"/>
<line x1="865.2" y1="373.5" x2="865.2" y2="559.5" stroke="#fafafa" stroke-width="1.2"/>
<line x1="880.3" y1="373.5" x2="880.3" y2="559.5" stroke="#fafafa" stroke-width="1.2"/>
<line x1="895.4" y1="373.5" x2="895.4" y2="559.5" stroke="#fafafa" stroke-width="1.2"/>
<line x1="910.5" y1="373.5" x2="910.5" y2="559.5" stroke="#fafafa" stroke-width="1.2"/>
<rect x="25.25" y="415.2" width="6.1" height="55.50" fill="#5b9bd5"/>
<rect x="25.25" y="470.7" width="6.1" height="57.30" fill="#4472c4"/>
<rect x="25.25" y="528" width="6.1" height="4" fill="#cf8e5c"/>
<rect x="25.25" y="528" width="6.1" height="2" fill="#ed7d31"/>
<rect x="40.33" y="415.2" width="6.1" height="55.50" fill="#5b9bd5"/>
<rect x="40.33" y="470.7" width="6.1" height="57.30" fill="#4472c4"/>
<rect x="40.33" y="528" width="6.1" height="4" fill="#cf8e5c"/>
<rect x="40.33" y="528" width="6.1" height="2" fill="#ed7d31"/>
<rect x="55.41" y="415.2" width="6.1" height="55.50" fill="#5b9bd5"/>
<rect x="55.41" y="470.7" width="6.1" height="57.30" fill="#4472c4"/>
<rect x="55.41" y="528" width="6.1" height="4" fill="#cf8e5c"/>
<rect x="55.41" y="528" width="6.1" height="2" fill="#ed7d31"/>
<rect x="70.49" y="415.2" width="6.1" height="55.50" fill="#5b9bd5"/>
<rect x="70.49" y="470.7" width="6.1" height="57.30" fill="#4472c4"/>
<rect x="70.49" y="528" width="6.1" height="4" fill="#cf8e5c"/>
<rect x="70.49" y="528" width="6.1" height="2" fill="#ed7d31"/>
<rect x="85.57" y="415.2" width="6.1" height="55.50" fill="#5b9bd5"/>
<rect x="85.57" y="470.7" width="6.1" height="57.30" fill="#4472c4"/>
<rect x="85.57" y="528" width="6.1" height="4" fill="#cf8e5c"/>
<rect x="85.57" y="528" width="6.1" height="2" fill="#ed7d31"/>
<rect x="100.65" y="415.2" width="6.1" height="55.50" fill="#5b9bd5"/>
<rect x="100.65" y="470.7" width="6.1" height="57.30" fill="#4472c4"/>
<rect x="100.65" y="528" width="6.1" height="4" fill="#cf8e5c"/>
<rect x="100.65" y="528" width="6.1" height="2" fill="#ed7d31"/>
<rect x="115.73" y="415.2" width="6.1" height="55.50" fill="#5b9bd5"/>
<rect x="115.73" y="470.7" width="6.1" height="57.30" fill="#4472c4"/>
<rect x="115.73" y="528" width="6.1" height="4" fill="#cf8e5c"/>
<rect x="115.73" y="528" width="6.1" height="2" fill="#ed7d31"/>
<rect x="130.81" y="415.2" width="6.1" height="55.50" fill="#5b9bd5"/>
<rect x="130.81" y="470.7" width="6.1" height="57.30" fill="#4472c4"/>
<rect x="130.81" y="528" width="6.1" height="4" fill="#cf8e5c"/>
<rect x="130.81" y="528" width="6.1" height="2" fill="#ed7d31"/>
<rect x="145.89" y="415.2" width="6.1" height="55.50" fill="#5b9bd5"/>
<rect x="145.89" y="470.7" width="6.1" height="57.30" fill="#4472c4"/>
<rect x="145.89" y="528" width="6.1" height="4" fill="#cf8e5c"/>
<rect x="145.89" y="528" width="6.1" height="2" fill="#ed7d31"/>
<rect x="160.97" y="415.2" width="6.1" height="55.50" fill="#5b9bd5"/>
<rect x="160.97" y="470.7" width="6.1" height="57.30" fill="#4472c4"/>
<rect x="160.97" y="528" width="6.1" height="4" fill="#cf8e5c"/>
<rect x="160.97" y="528" width="6.1" height="2" fill="#ed7d31"/>
<rect x="176.05" y="415.2" width="6.1" height="55.50" fill="#5b9bd5"/>
<rect x="176.05" y="470.7" width="6.1" height="57.30" fill="#4472c4"/>
<rect x="176.05" y="528" width="6.1" height="4" fill="#cf8e5c"/>
<rect x="176.05" y="528" width="6.1" height="2" fill="#ed7d31"/>
<rect x="191.13" y="415.2" width="6.1" height="55.50" fill="#5b9bd5"/>
<rect x="191.13" y="470.7" width="6.1" height="57.30" fill="#4472c4"/>
<rect x="191.13" y="528" width="6.1" height="4" fill="#cf8e5c"/>
<rect x="191.13" y="528" width="6.1" height="2" fill="#ed7d31"/>
<rect x="206.21" y="416.5" width="6.1" height="54.20" fill="#5b9bd5"/>
<rect x="206.21" y="470.7" width="6.1" height="57.30" fill="#4472c4"/>
<rect x="206.21" y="528" width="6.1" height="5" fill="#cf8e5c"/>
<rect x="206.21" y="528" width="6.1" height="2" fill="#ed7d31"/>
<rect x="221.29" y="401.3" width="6.1" height="61.40" fill="#5b9bd5"/>
<rect x="221.29" y="462.7" width="6.1" height="65.30" fill="#4472c4"/>
<rect x="221.29" y="528" width="6.1" height="5" fill="#cf8e5c"/>
<rect x="221.29" y="528" width="6.1" height="2" fill="#ed7d31"/>
<rect x="236.37" y="401" width="6.1" height="61.70" fill="#5b9bd5"/>
<rect x="236.37" y="462.7" width="6.1" height="65.30" fill="#4472c4"/>
<rect x="236.37" y="528" width="6.1" height="5" fill="#cf8e5c"/>
<rect x="236.37" y="528" width="6.1" height="2" fill="#ed7d31"/>
<rect x="251.45" y="400.8" width="6.1" height="61.90" fill="#5b9bd5"/>
<rect x="251.45" y="462.7" width="6.1" height="65.30" fill="#4472c4"/>
<rect x="251.45" y="528" width="6.1" height="5" fill="#cf8e5c"/>
<rect x="251.45" y="528" width="6.1" height="2" fill="#ed7d31"/>
<rect x="266.53" y="400.6" width="6.1" height="62.10" fill="#5b9bd5"/>
<rect x="266.53" y="462.7" width="6.1" height="65.30" fill="#4472c4"/>
<rect x="266.53" y="528" width="6.1" height="5" fill="#cf8e5c"/>
<rect x="266.53" y="528" width="6.1" height="2" fill="#ed7d31"/>
<rect x="281.61" y="400.4" width="6.1" height="62.30" fill="#5b9bd5"/>
<rect x="281.61" y="462.7" width="6.1" height="65.30" fill="#4472c4"/>
<rect x="281.61" y="528" width="6.1" height="5" fill="#cf8e5c"/>
<rect x="281.61" y="528" width="6.1" height="2" fill="#ed7d31"/>
<rect x="296.69" y="400.2" width="6.1" height="62.50" fill="#5b9bd5"/>
<rect x="296.69" y="462.7" width="6.1" height="65.30" fill="#4472c4"/>
<rect x="296.69" y="528" width="6.1" height="5" fill="#cf8e5c"/>
<rect x="296.69" y="528" width="6.1" height="2" fill="#ed7d31"/>
<rect x="311.77" y="400" width="6.1" height="62.70" fill="#5b9bd5"/>
<rect x="311.77" y="462.7" width="6.1" height="65.30" fill="#4472c4"/>
<rect x="311.77" y="528" width="6.1" height="5" fill="#cf8e5c"/>
<rect x="311.77" y="528" width="6.1" height="2" fill="#ed7d31"/>
<rect x="326.85" y="399.8" width="6.1" height="62.90" fill="#5b9bd5"/>
<rect x="326.85" y="462.7" width="6.1" height="65.30" fill="#4472c4"/>
<rect x="326.85" y="528" width="6.1" height="5" fill="#cf8e5c"/>
<rect x="326.85" y="528" width="6.1" height="2" fill="#ed7d31"/>
<rect x="341.93" y="399.6" width="6.1" height="63.10" fill="#5b9bd5"/>
<rect x="341.93" y="462.7" width="6.1" height="65.30" fill="#4472c4"/>
<rect x="341.93" y="528" width="6.1" height="5" fill="#cf8e5c"/>
<rect x="341.93" y="528" width="6.1" height="2" fill="#ed7d31"/>
<rect x="357.01" y="399.4" width="6.1" height="63.30" fill="#5b9bd5"/>
<rect x="357.01" y="462.7" width="6.1" height="65.30" fill="#4472c4"/>
<rect x="357.01" y="528" width="6.1" height="5" fill="#cf8e5c"/>
<rect x="357.01" y="528" width="6.1" height="2" fill="#ed7d31"/>
<rect x="372.09" y="399.2" width="6.1" height="63.50" fill="#5b9bd5"/>
<rect x="372.09" y="462.7" width="6.1" height="65.30" fill="#4472c4"/>
<rect x="372.09" y="528" width="6.1" height="5" fill="#cf8e5c"/>
<rect x="372.09" y="528" width="6.1" height="2" fill="#ed7d31"/>
<rect x="387.17" y="416.5" width="6.1" height="53.80" fill="#5b9bd5"/>
<rect x="387.17" y="470.3" width="6.1" height="57.70" fill="#4472c4"/>
<rect x="387.17" y="528" width="6.1" height="3.2" fill="#ed7d31"/>
<rect x="387.17" y="531.2" width="6.1" height="5.3" fill="#b39a86"/>
<rect x="387.17" y="536.5" width="6.1" height="7" fill="#ffc000"/>
<rect x="402.25" y="416.5" width="6.1" height="53.80" fill="#5b9bd5"/>
<rect x="402.25" y="470.3" width="6.1" height="57.70" fill="#4472c4"/>
<rect x="402.25" y="528" width="6.1" height="3.2" fill="#ed7d31"/>
<rect x="402.25" y="531.2" width="6.1" height="5.3" fill="#b39a86"/>
<rect x="402.25" y="536.5" width="6.1" height="7" fill="#ffc000"/>
<rect x="417.33" y="416.5" width="6.1" height="53.80" fill="#5b9bd5"/>
<rect x="417.33" y="470.3" width="6.1" height="57.70" fill="#4472c4"/>
<rect x="417.33" y="528" width="6.1" height="3.2" fill="#ed7d31"/>
<rect x="417.33" y="531.2" width="6.1" height="5.3" fill="#b39a86"/>
<rect x="417.33" y="536.5" width="6.1" height="7" fill="#ffc000"/>
<rect x="432.41" y="416.5" width="6.1" height="53.80" fill="#5b9bd5"/>
<rect x="432.41" y="470.3" width="6.1" height="57.70" fill="#4472c4"/>
<rect x="432.41" y="528" width="6.1" height="3.2" fill="#ed7d31"/>
<rect x="432.41" y="531.2" width="6.1" height="5.3" fill="#b39a86"/>
<rect x="432.41" y="536.5" width="6.1" height="7" fill="#ffc000"/>
<rect x="447.49" y="416.5" width="6.1" height="53.80" fill="#5b9bd5"/>
<rect x="447.49" y="470.3" width="6.1" height="57.70" fill="#4472c4"/>
<rect x="447.49" y="528" width="6.1" height="3.2" fill="#ed7d31"/>
<rect x="447.49" y="531.2" width="6.1" height="5.3" fill="#b39a86"/>
<rect x="447.49" y="536.5" width="6.1" height="7" fill="#ffc000"/>
<rect x="462.57" y="416.5" width="6.1" height="53.80" fill="#5b9bd5"/>
<rect x="462.57" y="470.3" width="6.1" height="57.70" fill="#4472c4"/>
<rect x="462.57" y="528" width="6.1" height="3.2" fill="#ed7d31"/>
<rect x="462.57" y="531.2" width="6.1" height="5.3" fill="#b39a86"/>
<rect x="462.57" y="536.5" width="6.1" height="7" fill="#ffc000"/>
<rect x="477.65" y="416.5" width="6.1" height="53.80" fill="#5b9bd5"/>
<rect x="477.65" y="470.3" width="6.1" height="57.70" fill="#4472c4"/>
<rect x="477.65" y="528" width="6.1" height="3.2" fill="#ed7d31"/>
<rect x="477.65" y="531.2" width="6.1" height="5.3" fill="#b39a86"/>
<rect x="477.65" y="536.5" width="6.1" height="7" fill="#ffc000"/>
<rect x="492.73" y="416.5" width="6.1" height="53.80" fill="#5b9bd5"/>
<rect x="492.73" y="470.3" width="6.1" height="57.70" fill="#4472c4"/>
<rect x="492.73" y="528" width="6.1" height="3.2" fill="#ed7d31"/>
<rect x="492.73" y="531.2" width="6.1" height="5.3" fill="#b39a86"/>
<rect x="492.73" y="536.5" width="6.1" height="7" fill="#ffc000"/>
<rect x="507.81" y="416.5" width="6.1" height="53.80" fill="#5b9bd5"/>
<rect x="507.81" y="470.3" width="6.1" height="57.70" fill="#4472c4"/>
<rect x="507.81" y="528" width="6.1" height="3.2" fill="#ed7d31"/>
<rect x="507.81" y="531.2" width="6.1" height="5.3" fill="#b39a86"/>
<rect x="507.81" y="536.5" width="6.1" height="7" fill="#ffc000"/>
<rect x="522.89" y="416.5" width="6.1" height="53.80" fill="#5b9bd5"/>
<rect x="522.89" y="470.3" width="6.1" height="57.70" fill="#4472c4"/>
<rect x="522.89" y="528" width="6.1" height="3.2" fill="#ed7d31"/>
<rect x="522.89" y="531.2" width="6.1" height="5.3" fill="#b39a86"/>
<rect x="522.89" y="536.5" width="6.1" height="7" fill="#ffc000"/>
<rect x="537.97" y="416.5" width="6.1" height="53.80" fill="#5b9bd5"/>
<rect x="537.97" y="470.3" width="6.1" height="57.70" fill="#4472c4"/>
<rect x="537.97" y="528" width="6.1" height="3.2" fill="#ed7d31"/>
<rect x="537.97" y="531.2" width="6.1" height="5.3" fill="#b39a86"/>
<rect x="537.97" y="536.5" width="6.1" height="7" fill="#ffc000"/>
<rect x="553.05" y="416.5" width="6.1" height="53.80" fill="#5b9bd5"/>
<rect x="553.05" y="470.3" width="6.1" height="57.70" fill="#4472c4"/>
<rect x="553.05" y="528" width="6.1" height="3.2" fill="#ed7d31"/>
<rect x="553.05" y="531.2" width="6.1" height="5.3" fill="#b39a86"/>
<rect x="553.05" y="536.5" width="6.1" height="7" fill="#ffc000"/>
<rect x="568.13" y="421" width="6.1" height="49.30" fill="#5b9bd5"/>
<rect x="568.13" y="470.3" width="6.1" height="57.70" fill="#4472c4"/>
<rect x="568.13" y="528" width="6.1" height="3.2" fill="#ed7d31"/>
<rect x="568.13" y="531.2" width="6.1" height="5.3" fill="#b39a86"/>
<rect x="568.13" y="536.5" width="6.1" height="7" fill="#ffc000"/>
<rect x="583.21" y="421" width="6.1" height="49.30" fill="#5b9bd5"/>
<rect x="583.21" y="470.3" width="6.1" height="57.70" fill="#4472c4"/>
<rect x="583.21" y="528" width="6.1" height="3.2" fill="#ed7d31"/>
<rect x="583.21" y="531.2" width="6.1" height="5.3" fill="#b39a86"/>
<rect x="583.21" y="536.5" width="6.1" height="7" fill="#ffc000"/>
<rect x="598.29" y="421" width="6.1" height="49.30" fill="#5b9bd5"/>
<rect x="598.29" y="470.3" width="6.1" height="57.70" fill="#4472c4"/>
<rect x="598.29" y="528" width="6.1" height="3.2" fill="#ed7d31"/>
<rect x="598.29" y="531.2" width="6.1" height="5.3" fill="#b39a86"/>
<rect x="598.29" y="536.5" width="6.1" height="7" fill="#ffc000"/>
<rect x="613.37" y="421" width="6.1" height="49.30" fill="#5b9bd5"/>
<rect x="613.37" y="470.3" width="6.1" height="57.70" fill="#4472c4"/>
<rect x="613.37" y="528" width="6.1" height="3.2" fill="#ed7d31"/>
<rect x="613.37" y="531.2" width="6.1" height="5.3" fill="#b39a86"/>
<rect x="613.37" y="536.5" width="6.1" height="7" fill="#ffc000"/>
<rect x="628.45" y="421" width="6.1" height="49.30" fill="#5b9bd5"/>
<rect x="628.45" y="470.3" width="6.1" height="57.70" fill="#4472c4"/>
<rect x="628.45" y="528" width="6.1" height="3.2" fill="#ed7d31"/>
<rect x="628.45" y="531.2" width="6.1" height="5.3" fill="#b39a86"/>
<rect x="628.45" y="536.5" width="6.1" height="7" fill="#ffc000"/>
<rect x="643.53" y="421" width="6.1" height="49.30" fill="#5b9bd5"/>
<rect x="643.53" y="470.3" width="6.1" height="57.70" fill="#4472c4"/>
<rect x="643.53" y="528" width="6.1" height="3.2" fill="#ed7d31"/>
<rect x="643.53" y="531.2" width="6.1" height="5.3" fill="#b39a86"/>
<rect x="643.53" y="536.5" width="6.1" height="7" fill="#ffc000"/>
<rect x="658.61" y="421" width="6.1" height="49.30" fill="#5b9bd5"/>
<rect x="658.61" y="470.3" width="6.1" height="57.70" fill="#4472c4"/>
<rect x="658.61" y="528" width="6.1" height="3.2" fill="#ed7d31"/>
<rect x="658.61" y="531.2" width="6.1" height="5.3" fill="#b39a86"/>
<rect x="658.61" y="536.5" width="6.1" height="7" fill="#ffc000"/>
<rect x="673.69" y="421" width="6.1" height="49.30" fill="#5b9bd5"/>
<rect x="673.69" y="470.3" width="6.1" height="57.70" fill="#4472c4"/>
<rect x="673.69" y="528" width="6.1" height="3.2" fill="#ed7d31"/>
<rect x="673.69" y="531.2" width="6.1" height="5.3" fill="#b39a86"/>
<rect x="673.69" y="536.5" width="6.1" height="7" fill="#ffc000"/>
<rect x="688.77" y="421" width="6.1" height="49.30" fill="#5b9bd5"/>
<rect x="688.77" y="470.3" width="6.1" height="57.70" fill="#4472c4"/>
<rect x="688.77" y="528" width="6.1" height="3.2" fill="#ed7d31"/>
<rect x="688.77" y="531.2" width="6.1" height="5.3" fill="#b39a86"/>
<rect x="688.77" y="536.5" width="6.1" height="7" fill="#ffc000"/>
<rect x="703.85" y="421" width="6.1" height="49.30" fill="#5b9bd5"/>
<rect x="703.85" y="470.3" width="6.1" height="57.70" fill="#4472c4"/>
<rect x="703.85" y="528" width="6.1" height="3.2" fill="#ed7d31"/>
<rect x="703.85" y="531.2" width="6.1" height="5.3" fill="#b39a86"/>
<rect x="703.85" y="536.5" width="6.1" height="7" fill="#ffc000"/>
<rect x="718.93" y="421" width="6.1" height="49.30" fill="#5b9bd5"/>
<rect x="718.93" y="470.3" width="6.1" height="57.70" fill="#4472c4"/>
<rect x="718.93" y="528" width="6.1" height="3.2" fill="#ed7d31"/>
<rect x="718.93" y="531.2" width="6.1" height="5.3" fill="#b39a86"/>
<rect x="718.93" y="536.5" width="6.1" height="7" fill="#ffc000"/>
<rect x="734.01" y="419.5" width="6.1" height="50.80" fill="#5b9bd5"/>
<rect x="734.01" y="470.3" width="6.1" height="57.70" fill="#4472c4"/>
<rect x="734.01" y="528" width="6.1" height="3.2" fill="#ed7d31"/>
<rect x="734.01" y="531.2" width="6.1" height="5.3" fill="#b39a86"/>
<rect x="734.01" y="536.5" width="6.1" height="7" fill="#ffc000"/>
<rect x="749.09" y="421" width="6.1" height="49.30" fill="#5b9bd5"/>
<rect x="749.09" y="470.3" width="6.1" height="57.70" fill="#4472c4"/>
<rect x="749.09" y="528" width="6.1" height="3.2" fill="#ed7d31"/>
<rect x="749.09" y="531.2" width="6.1" height="5.3" fill="#b39a86"/>
<rect x="749.09" y="536.5" width="6.1" height="7" fill="#ffc000"/>
<rect x="764.17" y="421" width="6.1" height="49.30" fill="#5b9bd5"/>
<rect x="764.17" y="470.3" width="6.1" height="57.70" fill="#4472c4"/>
<rect x="764.17" y="528" width="6.1" height="3.2" fill="#ed7d31"/>
<rect x="764.17" y="531.2" width="6.1" height="5.3" fill="#b39a86"/>
<rect x="764.17" y="536.5" width="6.1" height="7" fill="#ffc000"/>
<rect x="779.25" y="421" width="6.1" height="49.30" fill="#5b9bd5"/>
<rect x="779.25" y="470.3" width="6.1" height="57.70" fill="#4472c4"/>
<rect x="779.25" y="528" width="6.1" height="3.2" fill="#ed7d31"/>
<rect x="779.25" y="531.2" width="6.1" height="5.3" fill="#b39a86"/>
<rect x="779.25" y="536.5" width="6.1" height="7" fill="#ffc000"/>
<rect x="794.33" y="421" width="6.1" height="49.30" fill="#5b9bd5"/>
<rect x="794.33" y="470.3" width="6.1" height="57.70" fill="#4472c4"/>
<rect x="794.33" y="528" width="6.1" height="3.2" fill="#ed7d31"/>
<rect x="794.33" y="531.2" width="6.1" height="5.3" fill="#b39a86"/>
<rect x="794.33" y="536.5" width="6.1" height="7" fill="#ffc000"/>
<rect x="809.41" y="421" width="6.1" height="49.30" fill="#5b9bd5"/>
<rect x="809.41" y="470.3" width="6.1" height="57.70" fill="#4472c4"/>
<rect x="809.41" y="528" width="6.1" height="3.2" fill="#ed7d31"/>
<rect x="809.41" y="531.2" width="6.1" height="5.3" fill="#b39a86"/>
<rect x="809.41" y="536.5" width="6.1" height="7" fill="#ffc000"/>
<rect x="824.49" y="421" width="6.1" height="49.30" fill="#5b9bd5"/>
<rect x="824.49" y="470.3" width="6.1" height="57.70" fill="#4472c4"/>
<rect x="824.49" y="528" width="6.1" height="3.2" fill="#ed7d31"/>
<rect x="824.49" y="531.2" width="6.1" height="5.3" fill="#b39a86"/>
<rect x="824.49" y="536.5" width="6.1" height="7" fill="#ffc000"/>
<rect x="839.57" y="421" width="6.1" height="49.30" fill="#5b9bd5"/>
<rect x="839.57" y="470.3" width="6.1" height="57.70" fill="#4472c4"/>
<rect x="839.57" y="528" width="6.1" height="3.2" fill="#ed7d31"/>
<rect x="839.57" y="531.2" width="6.1" height="5.3" fill="#b39a86"/>
<rect x="839.57" y="536.5" width="6.1" height="7" fill="#ffc000"/>
<rect x="854.65" y="421" width="6.1" height="49.30" fill="#5b9bd5"/>
<rect x="854.65" y="470.3" width="6.1" height="57.70" fill="#4472c4"/>
<rect x="854.65" y="528" width="6.1" height="3.2" fill="#ed7d31"/>
<rect x="854.65" y="531.2" width="6.1" height="5.3" fill="#b39a86"/>
<rect x="854.65" y="536.5" width="6.1" height="7" fill="#ffc000"/>
<rect x="869.73" y="421" width="6.1" height="49.30" fill="#5b9bd5"/>
<rect x="869.73" y="470.3" width="6.1" height="57.70" fill="#4472c4"/>
<rect x="869.73" y="528" width="6.1" height="3.2" fill="#ed7d31"/>
<rect x="869.73" y="531.2" width="6.1" height="5.3" fill="#b39a86"/>
<rect x="869.73" y="536.5" width="6.1" height="7" fill="#ffc000"/>
<rect x="884.81" y="421" width="6.1" height="49.30" fill="#5b9bd5"/>
<rect x="884.81" y="470.3" width="6.1" height="57.70" fill="#4472c4"/>
<rect x="884.81" y="528" width="6.1" height="3.2" fill="#ed7d31"/>
<rect x="884.81" y="531.2" width="6.1" height="5.3" fill="#b39a86"/>
<rect x="884.81" y="536.5" width="6.1" height="7" fill="#ffc000"/>
<rect x="899.89" y="421" width="6.1" height="49.30" fill="#5b9bd5"/>
<rect x="899.89" y="470.3" width="6.1" height="57.70" fill="#4472c4"/>
<rect x="899.89" y="528" width="6.1" height="3.2" fill="#ed7d31"/>
<rect x="899.89" y="531.2" width="6.1" height="5.3" fill="#b39a86"/>
<rect x="899.89" y="536.5" width="6.1" height="7" fill="#ffc000"/>
<rect x="914.97" y="421" width="6.1" height="49.30" fill="#5b9bd5"/>
<rect x="914.97" y="470.3" width="6.1" height="57.70" fill="#4472c4"/>
<rect x="914.97" y="528" width="6.1" height="3.2" fill="#ed7d31"/>
<rect x="914.97" y="531.2" width="6.1" height="5.3" fill="#b39a86"/>
<rect x="914.97" y="536.5" width="6.1" height="7" fill="#ffc000"/>
<text x="28.30" y="541.00" font-size="7.9" fill="#4d4d4d" stroke="#4d4d4d" stroke-width="0.15" text-anchor="middle" textLength="10.44" lengthAdjust="spacingAndGlyphs">Jan</text>
<text x="43.38" y="541.00" font-size="7.9" fill="#4d4d4d" stroke="#4d4d4d" stroke-width="0.15" text-anchor="middle" textLength="11.16" lengthAdjust="spacingAndGlyphs">Feb</text>
<text x="58.46" y="541.00" font-size="7.9" fill="#4d4d4d" stroke="#4d4d4d" stroke-width="0.15" text-anchor="middle" textLength="11.16" lengthAdjust="spacingAndGlyphs">Mar</text>
<text x="73.54" y="541.00" font-size="7.9" fill="#4d4d4d" stroke="#4d4d4d" stroke-width="0.15" text-anchor="middle" textLength="10.08" lengthAdjust="spacingAndGlyphs">Apr</text>
<text x="88.62" y="541.00" font-size="7.9" fill="#4d4d4d" stroke="#4d4d4d" stroke-width="0.15" text-anchor="middle" textLength="12.24" lengthAdjust="spacingAndGlyphs">May</text>
<text x="103.70" y="541.00" font-size="7.9" fill="#4d4d4d" stroke="#4d4d4d" stroke-width="0.15" text-anchor="middle" textLength="10.44" lengthAdjust="spacingAndGlyphs">Jun</text>
<text x="118.78" y="541.00" font-size="7.9" fill="#4d4d4d" stroke="#4d4d4d" stroke-width="0.15" text-anchor="middle" textLength="8.28" lengthAdjust="spacingAndGlyphs">Jul</text>
<text x="133.86" y="541.00" font-size="7.9" fill="#4d4d4d" stroke="#4d4d4d" stroke-width="0.15" text-anchor="middle" textLength="11.53" lengthAdjust="spacingAndGlyphs">Aug</text>
<text x="148.94" y="541.00" font-size="7.9" fill="#4d4d4d" stroke="#4d4d4d" stroke-width="0.15" text-anchor="middle" textLength="13.33" lengthAdjust="spacingAndGlyphs">Sept</text>
<text x="164.02" y="541.00" font-size="7.9" fill="#4d4d4d" stroke="#4d4d4d" stroke-width="0.15" text-anchor="middle" textLength="10.08" lengthAdjust="spacingAndGlyphs">Oct</text>
<text x="179.10" y="541.00" font-size="7.9" fill="#4d4d4d" stroke="#4d4d4d" stroke-width="0.15" text-anchor="middle" textLength="11.52" lengthAdjust="spacingAndGlyphs">Nov</text>
<text x="194.18" y="541.00" font-size="7.9" fill="#4d4d4d" stroke="#4d4d4d" stroke-width="0.15" text-anchor="middle" textLength="11.52" lengthAdjust="spacingAndGlyphs">Dec</text>
<text x="209.26" y="541.00" font-size="7.9" fill="#4d4d4d" stroke="#4d4d4d" stroke-width="0.15" text-anchor="middle" textLength="10.44" lengthAdjust="spacingAndGlyphs">Jan</text>
<text x="224.34" y="541.00" font-size="7.9" fill="#4d4d4d" stroke="#4d4d4d" stroke-width="0.15" text-anchor="middle" textLength="11.16" lengthAdjust="spacingAndGlyphs">Feb</text>
<text x="239.42" y="541.00" font-size="7.9" fill="#4d4d4d" stroke="#4d4d4d" stroke-width="0.15" text-anchor="middle" textLength="11.16" lengthAdjust="spacingAndGlyphs">Mar</text>
<text x="254.50" y="541.00" font-size="7.9" fill="#4d4d4d" stroke="#4d4d4d" stroke-width="0.15" text-anchor="middle" textLength="10.08" lengthAdjust="spacingAndGlyphs">Apr</text>
<text x="269.58" y="541.00" font-size="7.9" fill="#4d4d4d" stroke="#4d4d4d" stroke-width="0.15" text-anchor="middle" textLength="12.24" lengthAdjust="spacingAndGlyphs">May</text>
<text x="284.66" y="541.00" font-size="7.9" fill="#4d4d4d" stroke="#4d4d4d" stroke-width="0.15" text-anchor="middle" textLength="10.44" lengthAdjust="spacingAndGlyphs">Jun</text>
<text x="299.74" y="541.00" font-size="7.9" fill="#4d4d4d" stroke="#4d4d4d" stroke-width="0.15" text-anchor="middle" textLength="8.28" lengthAdjust="spacingAndGlyphs">Jul</text>
<text x="314.82" y="541.00" font-size="7.9" fill="#4d4d4d" stroke="#4d4d4d" stroke-width="0.15" text-anchor="middle" textLength="11.53" lengthAdjust="spacingAndGlyphs">Aug</text>
<text x="329.90" y="541.00" font-size="7.9" fill="#4d4d4d" stroke="#4d4d4d" stroke-width="0.15" text-anchor="middle" textLength="11.53" lengthAdjust="spacingAndGlyphs">Sep</text>
<text x="344.98" y="541.00" font-size="7.9" fill="#4d4d4d" stroke="#4d4d4d" stroke-width="0.15" text-anchor="middle" textLength="10.08" lengthAdjust="spacingAndGlyphs">Oct</text>
<text x="360.06" y="541.00" font-size="7.9" fill="#4d4d4d" stroke="#4d4d4d" stroke-width="0.15" text-anchor="middle" textLength="11.52" lengthAdjust="spacingAndGlyphs">Nov</text>
<text x="375.14" y="541.00" font-size="7.9" fill="#4d4d4d" stroke="#4d4d4d" stroke-width="0.15" text-anchor="middle" textLength="11.52" lengthAdjust="spacingAndGlyphs">Dec</text>
<text x="390.22" y="541.00" font-size="7.9" fill="#4d4d4d" stroke="#4d4d4d" stroke-width="0.15" text-anchor="middle" textLength="10.44" lengthAdjust="spacingAndGlyphs">Jan</text>
<text x="405.30" y="541.00" font-size="7.9" fill="#4d4d4d" stroke="#4d4d4d" stroke-width="0.15" text-anchor="middle" textLength="11.16" lengthAdjust="spacingAndGlyphs">Feb</text>
<text x="420.38" y="541.00" font-size="7.9" fill="#4d4d4d" stroke="#4d4d4d" stroke-width="0.15" text-anchor="middle" textLength="11.16" lengthAdjust="spacingAndGlyphs">Mar</text>
<text x="435.46" y="541.00" font-size="7.9" fill="#4d4d4d" stroke="#4d4d4d" stroke-width="0.15" text-anchor="middle" textLength="10.08" lengthAdjust="spacingAndGlyphs">Apr</text>
<text x="450.54" y="541.00" font-size="7.9" fill="#4d4d4d" stroke="#4d4d4d" stroke-width="0.15" text-anchor="middle" textLength="12.24" lengthAdjust="spacingAndGlyphs">May</text>
<text x="465.62" y="541.00" font-size="7.9" fill="#4d4d4d" stroke="#4d4d4d" stroke-width="0.15" text-anchor="middle" textLength="10.44" lengthAdjust="spacingAndGlyphs">Jun</text>
<text x="480.70" y="541.00" font-size="7.9" fill="#4d4d4d" stroke="#4d4d4d" stroke-width="0.15" text-anchor="middle" textLength="8.28" lengthAdjust="spacingAndGlyphs">Jul</text>
<text x="495.78" y="541.00" font-size="7.9" fill="#4d4d4d" stroke="#4d4d4d" stroke-width="0.15" text-anchor="middle" textLength="11.53" lengthAdjust="spacingAndGlyphs">Aug</text>
<text x="510.86" y="541.00" font-size="7.9" fill="#4d4d4d" stroke="#4d4d4d" stroke-width="0.15" text-anchor="middle" textLength="11.53" lengthAdjust="spacingAndGlyphs">Sep</text>
<text x="525.94" y="541.00" font-size="7.9" fill="#4d4d4d" stroke="#4d4d4d" stroke-width="0.15" text-anchor="middle" textLength="10.08" lengthAdjust="spacingAndGlyphs">Oct</text>
<text x="541.02" y="541.00" font-size="7.9" fill="#4d4d4d" stroke="#4d4d4d" stroke-width="0.15" text-anchor="middle" textLength="11.52" lengthAdjust="spacingAndGlyphs">Nov</text>
<text x="556.10" y="541.00" font-size="7.9" fill="#4d4d4d" stroke="#4d4d4d" stroke-width="0.15" text-anchor="middle" textLength="11.52" lengthAdjust="spacingAndGlyphs">Dec</text>
<text x="571.18" y="541.00" font-size="7.9" fill="#4d4d4d" stroke="#4d4d4d" stroke-width="0.15" text-anchor="middle" textLength="10.44" lengthAdjust="spacingAndGlyphs">Jan</text>
<text x="586.26" y="541.00" font-size="7.9" fill="#4d4d4d" stroke="#4d4d4d" stroke-width="0.15" text-anchor="middle" textLength="11.16" lengthAdjust="spacingAndGlyphs">Feb</text>
<text x="601.34" y="541.00" font-size="7.9" fill="#4d4d4d" stroke="#4d4d4d" stroke-width="0.15" text-anchor="middle" textLength="11.16" lengthAdjust="spacingAndGlyphs">Mar</text>
<text x="616.42" y="541.00" font-size="7.9" fill="#4d4d4d" stroke="#4d4d4d" stroke-width="0.15" text-anchor="middle" textLength="10.08" lengthAdjust="spacingAndGlyphs">Apr</text>
<text x="631.50" y="541.00" font-size="7.9" fill="#4d4d4d" stroke="#4d4d4d" stroke-width="0.15" text-anchor="middle" textLength="12.24" lengthAdjust="spacingAndGlyphs">May</text>
<text x="646.58" y="541.00" font-size="7.9" fill="#4d4d4d" stroke="#4d4d4d" stroke-width="0.15" text-anchor="middle" textLength="10.44" lengthAdjust="spacingAndGlyphs">Jun</text>
<text x="661.66" y="541.00" font-size="7.9" fill="#4d4d4d" stroke="#4d4d4d" stroke-width="0.15" text-anchor="middle" textLength="8.28" lengthAdjust="spacingAndGlyphs">Jul</text>
<text x="676.74" y="541.00" font-size="7.9" fill="#4d4d4d" stroke="#4d4d4d" stroke-width="0.15" text-anchor="middle" textLength="11.53" lengthAdjust="spacingAndGlyphs">Aug</text>
<text x="691.82" y="541.00" font-size="7.9" fill="#4d4d4d" stroke="#4d4d4d" stroke-width="0.15" text-anchor="middle" textLength="11.53" lengthAdjust="spacingAndGlyphs">Sep</text>
<text x="706.90" y="541.00" font-size="7.9" fill="#4d4d4d" stroke="#4d4d4d" stroke-width="0.15" text-anchor="middle" textLength="10.08" lengthAdjust="spacingAndGlyphs">Oct</text>
<text x="721.98" y="541.00" font-size="7.9" fill="#4d4d4d" stroke="#4d4d4d" stroke-width="0.15" text-anchor="middle" textLength="11.52" lengthAdjust="spacingAndGlyphs">Nov</text>
<text x="737.06" y="541.00" font-size="7.9" fill="#4d4d4d" stroke="#4d4d4d" stroke-width="0.15" text-anchor="middle" textLength="11.52" lengthAdjust="spacingAndGlyphs">Dec</text>
<text x="752.14" y="541.00" font-size="7.9" fill="#4d4d4d" stroke="#4d4d4d" stroke-width="0.15" text-anchor="middle" textLength="10.44" lengthAdjust="spacingAndGlyphs">Jan</text>
<text x="767.22" y="541.00" font-size="7.9" fill="#4d4d4d" stroke="#4d4d4d" stroke-width="0.15" text-anchor="middle" textLength="11.16" lengthAdjust="spacingAndGlyphs">Feb</text>
<text x="782.30" y="541.00" font-size="7.9" fill="#4d4d4d" stroke="#4d4d4d" stroke-width="0.15" text-anchor="middle" textLength="11.16" lengthAdjust="spacingAndGlyphs">Mar</text>
<text x="797.38" y="541.00" font-size="7.9" fill="#4d4d4d" stroke="#4d4d4d" stroke-width="0.15" text-anchor="middle" textLength="10.08" lengthAdjust="spacingAndGlyphs">Apr</text>
<text x="812.46" y="541.00" font-size="7.9" fill="#4d4d4d" stroke="#4d4d4d" stroke-width="0.15" text-anchor="middle" textLength="12.24" lengthAdjust="spacingAndGlyphs">May</text>
<text x="827.54" y="541.00" font-size="7.9" fill="#4d4d4d" stroke="#4d4d4d" stroke-width="0.15" text-anchor="middle" textLength="10.44" lengthAdjust="spacingAndGlyphs">Jun</text>
<text x="842.62" y="541.00" font-size="7.9" fill="#4d4d4d" stroke="#4d4d4d" stroke-width="0.15" text-anchor="middle" textLength="8.28" lengthAdjust="spacingAndGlyphs">Jul</text>
<text x="857.70" y="541.00" font-size="7.9" fill="#4d4d4d" stroke="#4d4d4d" stroke-width="0.15" text-anchor="middle" textLength="11.53" lengthAdjust="spacingAndGlyphs">Aug</text>
<text x="872.78" y="541.00" font-size="7.9" fill="#4d4d4d" stroke="#4d4d4d" stroke-width="0.15" text-anchor="middle" textLength="11.53" lengthAdjust="spacingAndGlyphs">Sep</text>
<text x="887.86" y="541.00" font-size="7.9" fill="#4d4d4d" stroke="#4d4d4d" stroke-width="0.15" text-anchor="middle" textLength="10.08" lengthAdjust="spacingAndGlyphs">Oct</text>
<text x="902.94" y="541.00" font-size="7.9" fill="#4d4d4d" stroke="#4d4d4d" stroke-width="0.15" text-anchor="middle" textLength="11.52" lengthAdjust="spacingAndGlyphs">Nov</text>
<text x="918.02" y="541.00" font-size="7.9" fill="#4d4d4d" stroke="#4d4d4d" stroke-width="0.15" text-anchor="middle" textLength="11.52" lengthAdjust="spacingAndGlyphs">Dec</text>
<text x="456.00" y="338.40" font-size="13.4" fill="#606060" text-anchor="middle" textLength="157.60" lengthAdjust="spacingAndGlyphs">Key KPI&#8217;s 5 Years 2025 - 2029</text>
<rect x="288.2" y="353.8" width="3.8" height="5.2" fill="#4472c4"/>
<text x="294.00" y="359.20" font-size="8.6" fill="#555555" stroke="#555555" stroke-width="0.12" text-anchor="start" textLength="27.60" lengthAdjust="spacingAndGlyphs">Revenue</text>
<rect x="334" y="353.8" width="3.8" height="5.2" fill="#ed7d31"/>
<text x="340.40" y="359.20" font-size="8.6" fill="#555555" stroke="#555555" stroke-width="0.12" text-anchor="start" textLength="35.60" lengthAdjust="spacingAndGlyphs">Total COGS</text>
<rect x="389" y="353.8" width="3.8" height="5.2" fill="#a5a5a5"/>
<text x="395.00" y="359.20" font-size="8.6" fill="#555555" stroke="#555555" stroke-width="0.12" text-anchor="start" textLength="74.00" lengthAdjust="spacingAndGlyphs">Total Variable Expenses</text>
<rect x="483" y="353.8" width="3.8" height="5.2" fill="#ffc000"/>
<text x="488.70" y="359.20" font-size="8.6" fill="#555555" stroke="#555555" stroke-width="0.12" text-anchor="start" textLength="95.30" lengthAdjust="spacingAndGlyphs">Total Admin Salary and Wages</text>
<rect x="597.8" y="353.8" width="3.8" height="5.2" fill="#5b9bd5"/>
<text x="603.50" y="359.20" font-size="8.6" fill="#555555" stroke="#555555" stroke-width="0.12" text-anchor="start" textLength="23.00" lengthAdjust="spacingAndGlyphs">EBITDA</text>
</svg>
<svg class="a" style="left:0;top:0" width="1000" height="592" font-family="Liberation Sans"><text x="120.20" y="18.80" font-size="8.8" fill="#e3f7e9" text-anchor="start" textLength="122.20" lengthAdjust="spacingAndGlyphs">Data Centre Financial Model 20.xlsx</text>
<text x="246.60" y="18.80" font-size="8.8" fill="#e3f7e9" text-anchor="start" textLength="2.80" lengthAdjust="spacingAndGlyphs">-</text>
<text x="254.40" y="18.80" font-size="8.8" fill="#e3f7e9" text-anchor="start" textLength="17.20" lengthAdjust="spacingAndGlyphs">Excel</text>
<text x="411.90" y="18.00" font-size="9.8" fill="#35603f" text-anchor="start" textLength="27.00" lengthAdjust="spacingAndGlyphs">Search</text>
<text x="14.00" y="44.80" font-size="9.4" fill="#2b2b2b" text-anchor="start" textLength="13.20" lengthAdjust="spacingAndGlyphs">File</text>
<text x="43.40" y="44.80" font-size="9.4" fill="#2b2b2b" text-anchor="start" textLength="24.40" lengthAdjust="spacingAndGlyphs">Home</text>
<text x="79.80" y="44.80" font-size="9.4" fill="#2b2b2b" text-anchor="start" textLength="22.40" lengthAdjust="spacingAndGlyphs">Insert</text>
<text x="114.80" y="44.80" font-size="9.4" fill="#2b2b2b" text-anchor="start" textLength="20.50" lengthAdjust="spacingAndGlyphs">Draw</text>
<text x="147.60" y="44.80" font-size="9.4" fill="#2b2b2b" text-anchor="start" textLength="48.40" lengthAdjust="spacingAndGlyphs">Page Layout</text>
<text x="208.60" y="44.80" font-size="9.4" fill="#2b2b2b" text-anchor="start" textLength="36.40" lengthAdjust="spacingAndGlyphs">Formulas</text>
<text x="257.00" y="44.80" font-size="9.4" fill="#2b2b2b" text-anchor="start" textLength="18.80" lengthAdjust="spacingAndGlyphs">Data</text>
<text x="288.70" y="44.80" font-size="9.4" fill="#2b2b2b" text-anchor="start" textLength="27.00" lengthAdjust="spacingAndGlyphs">Review</text>
<text x="329.00" y="44.80" font-size="9.4" fill="#2b2b2b" text-anchor="start" textLength="19.00" lengthAdjust="spacingAndGlyphs">View</text>
<text x="360.50" y="44.80" font-size="9.4" fill="#2b2b2b" text-anchor="start" textLength="39.20" lengthAdjust="spacingAndGlyphs">Developer</text>
<text x="412.60" y="44.80" font-size="9.4" fill="#2b2b2b" text-anchor="start" textLength="18.20" lengthAdjust="spacingAndGlyphs">Help</text>
<text x="444.00" y="44.80" font-size="9.4" fill="#2b2b2b" text-anchor="start" textLength="30.20" lengthAdjust="spacingAndGlyphs">Acrobat</text>
<text x="487.50" y="44.80" font-size="9.4" fill="#2b2b2b" text-anchor="start" textLength="45.50" lengthAdjust="spacingAndGlyphs">Power Pivot</text>
<text x="960.00" y="45.00" font-size="9.6" fill="#ffffff" text-anchor="start" textLength="21.80" lengthAdjust="spacingAndGlyphs">Share</text>
<text x="38.34" y="60.50" font-size="9.2" fill="#2a2a2a" text-anchor="middle" textLength="5.98" lengthAdjust="spacingAndGlyphs">C</text>
<text x="80.02" y="60.50" font-size="9.2" fill="#2a2a2a" text-anchor="middle" textLength="5.98" lengthAdjust="spacingAndGlyphs">D</text>
<text x="121.70" y="60.50" font-size="9.2" fill="#2a2a2a" text-anchor="middle" textLength="5.52" lengthAdjust="spacingAndGlyphs">E</text>
<text x="163.38" y="60.50" font-size="9.2" fill="#2a2a2a" text-anchor="middle" textLength="5.06" lengthAdjust="spacingAndGlyphs">F</text>
<text x="205.06" y="60.50" font-size="9.2" fill="#2a2a2a" text-anchor="middle" textLength="6.44" lengthAdjust="spacingAndGlyphs">G</text>
<text x="246.74" y="60.50" font-size="9.2" fill="#2a2a2a" text-anchor="middle" textLength="5.98" lengthAdjust="spacingAndGlyphs">H</text>
<text x="288.42" y="60.50" font-size="9.2" fill="#2a2a2a" text-anchor="middle" textLength="2.30" lengthAdjust="spacingAndGlyphs">I</text>
<text x="330.10" y="60.50" font-size="9.2" fill="#2a2a2a" text-anchor="middle" textLength="4.14" lengthAdjust="spacingAndGlyphs">J</text>
<text x="371.78" y="60.50" font-size="9.2" fill="#2a2a2a" text-anchor="middle" textLength="5.52" lengthAdjust="spacingAndGlyphs">K</text>
<text x="413.46" y="60.50" font-size="9.2" fill="#2a2a2a" text-anchor="middle" textLength="4.60" lengthAdjust="spacingAndGlyphs">L</text>
<text x="455.14" y="60.50" font-size="9.2" fill="#2a2a2a" text-anchor="middle" textLength="6.90" lengthAdjust="spacingAndGlyphs">M</text>
<text x="496.82" y="60.50" font-size="9.2" fill="#1f5c39" text-anchor="middle" textLength="5.98" lengthAdjust="spacingAndGlyphs">N</text>
<text x="538.50" y="60.50" font-size="9.2" fill="#2a2a2a" text-anchor="middle" textLength="6.44" lengthAdjust="spacingAndGlyphs">O</text>
<text x="580.18" y="60.50" font-size="9.2" fill="#2a2a2a" text-anchor="middle" textLength="5.52" lengthAdjust="spacingAndGlyphs">P</text>
<text x="621.86" y="60.50" font-size="9.2" fill="#2a2a2a" text-anchor="middle" textLength="6.44" lengthAdjust="spacingAndGlyphs">Q</text>
<text x="663.54" y="60.50" font-size="9.2" fill="#2a2a2a" text-anchor="middle" textLength="5.98" lengthAdjust="spacingAndGlyphs">R</text>
<text x="705.22" y="60.50" font-size="9.2" fill="#2a2a2a" text-anchor="middle" textLength="5.52" lengthAdjust="spacingAndGlyphs">S</text>
<text x="746.90" y="60.50" font-size="9.2" fill="#2a2a2a" text-anchor="middle" textLength="5.06" lengthAdjust="spacingAndGlyphs">T</text>
<text x="788.58" y="60.50" font-size="9.2" fill="#2a2a2a" text-anchor="middle" textLength="5.98" lengthAdjust="spacingAndGlyphs">U</text>
<text x="830.26" y="60.50" font-size="9.2" fill="#2a2a2a" text-anchor="middle" textLength="5.52" lengthAdjust="spacingAndGlyphs">V</text>
<text x="871.94" y="60.50" font-size="9.2" fill="#2a2a2a" text-anchor="middle" textLength="7.82" lengthAdjust="spacingAndGlyphs">W</text>
<text x="913.62" y="60.50" font-size="9.2" fill="#2a2a2a" text-anchor="middle" textLength="5.52" lengthAdjust="spacingAndGlyphs">X</text>
<text x="955.30" y="60.50" font-size="9.2" fill="#2a2a2a" text-anchor="middle" textLength="5.52" lengthAdjust="spacingAndGlyphs">Y</text>
<text x="79.00" y="572.80" font-size="9.2" fill="#333333" text-anchor="start" textLength="32.50" lengthAdjust="spacingAndGlyphs">BS 2044</text>
<text x="131.00" y="572.80" font-size="9.2" fill="#333333" text-anchor="start" textLength="107.30" lengthAdjust="spacingAndGlyphs">Statements Summary 2044</text>
<text x="256.80" y="572.80" font-size="9.2" fill="#333333" text-anchor="start" textLength="48.50" lengthAdjust="spacingAndGlyphs">CAPEX 2044</text>
<text x="324.00" y="572.80" font-size="9.2" fill="#333333" text-anchor="start" textLength="75.00" lengthAdjust="spacingAndGlyphs">Key Metrics Charts</text>
<text x="417.60" y="572.80" font-size="9.2" fill="#333333" text-anchor="start" textLength="88.80" lengthAdjust="spacingAndGlyphs">Sales Summary Charts</text>
<text x="524.00" y="570.80" font-size="9.4" fill="#262626" text-anchor="start" textLength="26.00" lengthAdjust="spacingAndGlyphs">Charts</text>
<text x="524.30" y="570.80" font-size="9.4" fill="#262626" text-anchor="start" textLength="26.00" lengthAdjust="spacingAndGlyphs">Charts</text>
<text x="566.60" y="572.80" font-size="9.2" fill="#333333" text-anchor="start" textLength="16.00" lengthAdjust="spacingAndGlyphs">BEA</text>
<text x="599.60" y="572.80" font-size="9.2" fill="#333333" text-anchor="start" textLength="36.00" lengthAdjust="spacingAndGlyphs">Expenses</text>
<text x="652.30" y="572.80" font-size="9.2" fill="#333333" text-anchor="start" textLength="79.10" lengthAdjust="spacingAndGlyphs">COGS Assumptions</text>
<text x="749.00" y="572.80" font-size="9.2" fill="#333333" text-anchor="start" textLength="84.50" lengthAdjust="spacingAndGlyphs">Salaries Assumptions</text>
<text x="852.00" y="572.80" font-size="9.2" fill="#333333" text-anchor="start" textLength="43.00" lengthAdjust="spacingAndGlyphs">Chart Data</text>
<text x="7.20" y="590.30" font-size="7.4" fill="#333333" text-anchor="start" textLength="18.40" lengthAdjust="spacingAndGlyphs">Ready</text>
<text x="71.20" y="590.30" font-size="7.2" fill="#222222" text-anchor="start" textLength="79.20" lengthAdjust="spacingAndGlyphs" font-weight="bold">Accessibility: Investigate</text>
<text x="978.00" y="589.80" font-size="6.8" fill="#444444" text-anchor="start" textLength="18.70" lengthAdjust="spacingAndGlyphs">100%</text><rect x="881" y="560" width="119" height="18.5" fill="#e7e9ec"/><g transform="translate(0,559.5)">
<g fill="none" stroke="#6a6a6a" stroke-width="1.1"><path d="M20 6.5 l-2.6 3 l2.6 3"/><path d="M38.8 6.5 l2.6 3 l-2.6 3"/></g>
<g fill="#333"><circle cx="57.5" cy="9.5" r="0.9"/><circle cx="60" cy="9.5" r="0.9"/><circle cx="62.5" cy="9.5" r="0.9"/></g>
<g fill="#333"><circle cx="888" cy="9.5" r="0.9"/><circle cx="890.5" cy="9.5" r="0.9"/><circle cx="893" cy="9.5" r="0.9"/></g>
<g stroke="#333" stroke-width="1"><line x1="907" y1="9.5" x2="915" y2="9.5"/><line x1="911" y1="5.5" x2="911" y2="13.5"/></g>
<g fill="#555"><circle cx="932" cy="6" r="0.9"/><circle cx="932" cy="9.5" r="0.9"/><circle cx="932" cy="13" r="0.9"/></g>
<path d="M945 9.5 l3.5 -3 v6 z" fill="#555"/>
<rect x="956" y="7" width="20.5" height="5" rx="2.5" fill="#6a6a6a"/>
<path d="M985 9.5 l-3.5 -3 v6 z" fill="#555"/>
</g></svg>
</body></html>
